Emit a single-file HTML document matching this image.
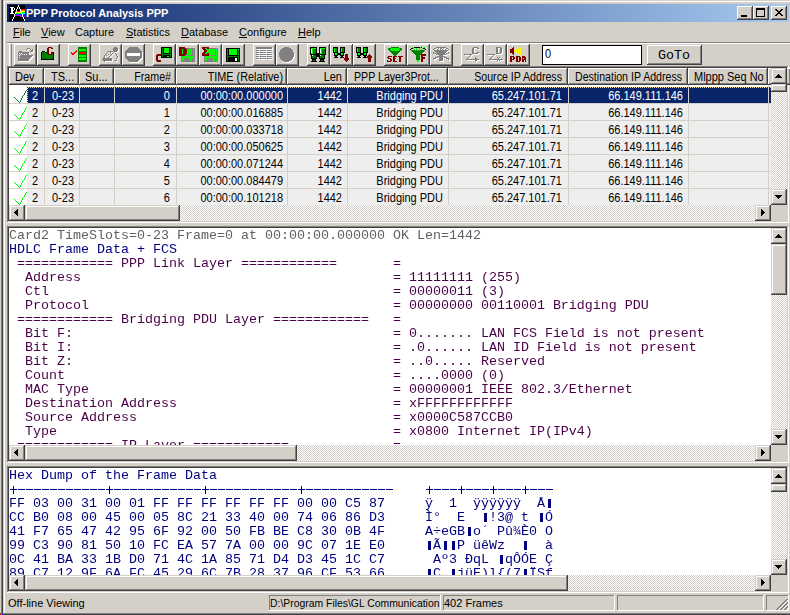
<!DOCTYPE html>
<html><head><meta charset="utf-8"><style>
html,body{margin:0;padding:0;}
body{width:790px;height:615px;overflow:hidden;position:relative;background:#D4D0C8;font-family:"Liberation Sans",sans-serif;font-size:11px;}
body>div,body>span{position:absolute;}
span{position:absolute;white-space:pre;line-height:13px;}
div>span{position:absolute;}
u{text-decoration:underline;text-underline-offset:1px;}
</style></head><body>
<div style="left:0px;top:0px;width:790px;height:615px;background:#D4D0C8;"></div>
<div style="left:1px;top:0px;width:1px;height:615px;background:#808080;"></div>
<div style="left:2px;top:0px;width:1px;height:615px;background:#404040;"></div>
<div style="left:4px;top:1px;width:786px;height:1px;background:#FFFFFF;"></div>
<div style="left:4px;top:1px;width:1px;height:612px;background:#FFFFFF;"></div>
<div style="left:3px;top:613px;width:787px;height:1px;background:#808080;"></div>
<div style="left:3px;top:614px;width:787px;height:1px;background:#404040;"></div>
<div style="left:0px;top:613px;width:3px;height:1px;background:#505050;"></div>
<div style="left:0px;top:614px;width:1px;height:1px;background:#FF0000;"></div>
<div style="left:1px;top:614px;width:1px;height:1px;background:#00FF00;"></div>
<div style="left:2px;top:614px;width:1px;height:1px;background:#0000FF;"></div>
<div style="left:7px;top:4px;width:782px;height:18px;background:#0A246A;background:linear-gradient(to right,#0A246A,#A6CAF0);"></div>
<svg style="position:absolute;left:0px;top:0px" width="30" height="22" viewBox="0 0 30 22" shape-rendering="crispEdges"><rect x="9" y="5" width="9" height="1" fill="#000000"/><rect x="18" y="5" width="1" height="1" fill="#FFFFFF"/><rect x="19" y="5" width="6" height="1" fill="#000000"/><rect x="9" y="6" width="9" height="1" fill="#000000"/><rect x="18" y="6" width="1" height="1" fill="#FFFFFF"/><rect x="19" y="6" width="6" height="1" fill="#000000"/><rect x="9" y="7" width="1" height="1" fill="#000000"/><rect x="10" y="7" width="4" height="1" fill="#FFFFFF"/><rect x="14" y="7" width="3" height="1" fill="#000000"/><rect x="17" y="7" width="1" height="1" fill="#FFFFFF"/><rect x="18" y="7" width="1" height="1" fill="#000000"/><rect x="19" y="7" width="1" height="1" fill="#FFFFFF"/><rect x="20" y="7" width="5" height="1" fill="#000000"/><rect x="9" y="8" width="2" height="1" fill="#000000"/><rect x="11" y="8" width="2" height="1" fill="#FFFFFF"/><rect x="13" y="8" width="1" height="1" fill="#000000"/><rect x="14" y="8" width="1" height="1" fill="#FFFFFF"/><rect x="15" y="8" width="2" height="1" fill="#000000"/><rect x="17" y="8" width="1" height="1" fill="#FFFFFF"/><rect x="18" y="8" width="1" height="1" fill="#000000"/><rect x="19" y="8" width="1" height="1" fill="#FFFFFF"/><rect x="20" y="8" width="5" height="1" fill="#000000"/><rect x="9" y="9" width="2" height="1" fill="#000000"/><rect x="11" y="9" width="2" height="1" fill="#FFFFFF"/><rect x="13" y="9" width="1" height="1" fill="#000000"/><rect x="14" y="9" width="1" height="1" fill="#FFFFFF"/><rect x="15" y="9" width="1" height="1" fill="#000000"/><rect x="16" y="9" width="1" height="1" fill="#FFFFFF"/><rect x="17" y="9" width="3" height="1" fill="#000000"/><rect x="20" y="9" width="1" height="1" fill="#FFFFFF"/><rect x="21" y="9" width="4" height="1" fill="#FF0000"/><rect x="9" y="10" width="2" height="1" fill="#000000"/><rect x="11" y="10" width="3" height="1" fill="#FFFFFF"/><rect x="14" y="10" width="2" height="1" fill="#000000"/><rect x="16" y="10" width="1" height="1" fill="#FFFFFF"/><rect x="17" y="10" width="3" height="1" fill="#000000"/><rect x="20" y="10" width="1" height="1" fill="#FFFFFF"/><rect x="21" y="10" width="4" height="1" fill="#FF8000"/><rect x="9" y="11" width="2" height="1" fill="#000000"/><rect x="11" y="11" width="2" height="1" fill="#FFFFFF"/><rect x="13" y="11" width="2" height="1" fill="#000000"/><rect x="15" y="11" width="1" height="1" fill="#FF0000"/><rect x="16" y="11" width="1" height="1" fill="#FFFFFF"/><rect x="17" y="11" width="3" height="1" fill="#FF0000"/><rect x="20" y="11" width="1" height="1" fill="#FFFFFF"/><rect x="21" y="11" width="4" height="1" fill="#FFFF00"/><rect x="9" y="12" width="2" height="1" fill="#000000"/><rect x="11" y="12" width="2" height="1" fill="#FFFFFF"/><rect x="13" y="12" width="2" height="1" fill="#000000"/><rect x="15" y="12" width="1" height="1" fill="#FFFFFF"/><rect x="16" y="12" width="5" height="1" fill="#FFFF00"/><rect x="21" y="12" width="1" height="1" fill="#FFFFFF"/><rect x="22" y="12" width="3" height="1" fill="#00FF00"/><rect x="9" y="13" width="1" height="1" fill="#000000"/><rect x="10" y="13" width="4" height="1" fill="#FFFFFF"/><rect x="14" y="13" width="1" height="1" fill="#000000"/><rect x="15" y="13" width="1" height="1" fill="#FFFFFF"/><rect x="16" y="13" width="5" height="1" fill="#00FF00"/><rect x="21" y="13" width="1" height="1" fill="#FFFFFF"/><rect x="22" y="13" width="3" height="1" fill="#00FFFF"/><rect x="9" y="14" width="5" height="1" fill="#000000"/><rect x="14" y="14" width="1" height="1" fill="#FFFFFF"/><rect x="15" y="14" width="7" height="1" fill="#0040FF"/><rect x="22" y="14" width="1" height="1" fill="#FFFFFF"/><rect x="23" y="14" width="2" height="1" fill="#0040FF"/><rect x="9" y="15" width="5" height="1" fill="#000000"/><rect x="14" y="15" width="1" height="1" fill="#FFFFFF"/><rect x="15" y="15" width="6" height="1" fill="#C000FF"/><rect x="21" y="15" width="1" height="1" fill="#0040FF"/><rect x="22" y="15" width="1" height="1" fill="#FFFFFF"/><rect x="23" y="15" width="2" height="1" fill="#0040FF"/><rect x="9" y="16" width="5" height="1" fill="#000000"/><rect x="14" y="16" width="1" height="1" fill="#FFFFFF"/><rect x="15" y="16" width="5" height="1" fill="#000000"/><rect x="20" y="16" width="2" height="1" fill="#C000FF"/><rect x="22" y="16" width="1" height="1" fill="#FFFFFF"/><rect x="23" y="16" width="2" height="1" fill="#C000FF"/><rect x="9" y="17" width="4" height="1" fill="#000000"/><rect x="13" y="17" width="1" height="1" fill="#FFFFFF"/><rect x="14" y="17" width="9" height="1" fill="#000000"/><rect x="23" y="17" width="1" height="1" fill="#FFFFFF"/><rect x="24" y="17" width="1" height="1" fill="#000000"/><rect x="9" y="18" width="4" height="1" fill="#000000"/><rect x="13" y="18" width="1" height="1" fill="#FFFFFF"/><rect x="14" y="18" width="9" height="1" fill="#000000"/><rect x="23" y="18" width="1" height="1" fill="#FFFFFF"/><rect x="24" y="18" width="1" height="1" fill="#000000"/><rect x="9" y="19" width="3" height="1" fill="#000000"/><rect x="12" y="19" width="1" height="1" fill="#FFFFFF"/><rect x="13" y="19" width="11" height="1" fill="#000000"/><rect x="24" y="19" width="1" height="1" fill="#FFFFFF"/><rect x="9" y="20" width="3" height="1" fill="#000000"/><rect x="12" y="20" width="1" height="1" fill="#FFFFFF"/><rect x="13" y="20" width="11" height="1" fill="#000000"/><rect x="24" y="20" width="1" height="1" fill="#FFFFFF"/></svg>
<span style="left:26px;top:7px;font-size:11px;color:#FFF;font-weight:bold;font-family:'Liberation Sans';">PPP Protocol Analysis PPP</span>
<div style="left:737px;top:6px;width:16px;height:14px;background:#D4D0C8;"></div>
<div style="left:737px;top:6px;width:16px;height:1px;background:#FFFFFF;"></div>
<div style="left:737px;top:6px;width:1px;height:14px;background:#FFFFFF;"></div>
<div style="left:738px;top:18px;width:14px;height:1px;background:#808080;"></div>
<div style="left:751px;top:7px;width:1px;height:12px;background:#808080;"></div>
<div style="left:737px;top:19px;width:16px;height:1px;background:#404040;"></div>
<div style="left:752px;top:6px;width:1px;height:14px;background:#404040;"></div>
<div style="left:753px;top:6px;width:16px;height:14px;background:#D4D0C8;"></div>
<div style="left:753px;top:6px;width:16px;height:1px;background:#FFFFFF;"></div>
<div style="left:753px;top:6px;width:1px;height:14px;background:#FFFFFF;"></div>
<div style="left:754px;top:18px;width:14px;height:1px;background:#808080;"></div>
<div style="left:767px;top:7px;width:1px;height:12px;background:#808080;"></div>
<div style="left:753px;top:19px;width:16px;height:1px;background:#404040;"></div>
<div style="left:768px;top:6px;width:1px;height:14px;background:#404040;"></div>
<div style="left:771px;top:6px;width:16px;height:14px;background:#D4D0C8;"></div>
<div style="left:771px;top:6px;width:16px;height:1px;background:#FFFFFF;"></div>
<div style="left:771px;top:6px;width:1px;height:14px;background:#FFFFFF;"></div>
<div style="left:772px;top:18px;width:14px;height:1px;background:#808080;"></div>
<div style="left:785px;top:7px;width:1px;height:12px;background:#808080;"></div>
<div style="left:771px;top:19px;width:16px;height:1px;background:#404040;"></div>
<div style="left:786px;top:6px;width:1px;height:14px;background:#404040;"></div>
<div style="left:741px;top:15px;width:6px;height:2px;background:#000;"></div>
<div style="left:756px;top:8px;width:9px;height:2px;background:#000;"></div>
<div style="left:756px;top:8px;width:1px;height:9px;background:#000;"></div>
<div style="left:764px;top:8px;width:1px;height:9px;background:#000;"></div>
<div style="left:756px;top:16px;width:9px;height:1px;background:#000;"></div>
<div style="left:775px;top:9px;width:2px;height:1px;background:#000;"></div>
<div style="left:781px;top:9px;width:2px;height:1px;background:#000;"></div>
<div style="left:776px;top:10px;width:2px;height:1px;background:#000;"></div>
<div style="left:780px;top:10px;width:2px;height:1px;background:#000;"></div>
<div style="left:777px;top:11px;width:4px;height:1px;background:#000;"></div>
<div style="left:778px;top:12px;width:2px;height:1px;background:#000;"></div>
<div style="left:777px;top:13px;width:4px;height:1px;background:#000;"></div>
<div style="left:776px;top:14px;width:2px;height:1px;background:#000;"></div>
<div style="left:780px;top:14px;width:2px;height:1px;background:#000;"></div>
<div style="left:775px;top:15px;width:2px;height:1px;background:#000;"></div>
<div style="left:781px;top:15px;width:2px;height:1px;background:#000;"></div>
<span style="left:13px;top:26px;font-size:11px;color:#000;font-weight:normal;font-family:'Liberation Sans';"><u>F</u>ile</span>
<span style="left:41px;top:26px;font-size:11px;color:#000;font-weight:normal;font-family:'Liberation Sans';"><u>V</u>iew</span>
<span style="left:75px;top:26px;font-size:11px;color:#000;font-weight:normal;font-family:'Liberation Sans';">Capture</span>
<span style="left:126px;top:26px;font-size:11px;color:#000;font-weight:normal;font-family:'Liberation Sans';"><u>S</u>tatistics</span>
<span style="left:181px;top:26px;font-size:11px;color:#000;font-weight:normal;font-family:'Liberation Sans';"><u>D</u>atabase</span>
<span style="left:239px;top:26px;font-size:11px;color:#000;font-weight:normal;font-family:'Liberation Sans';"><u>C</u>onfigure</span>
<span style="left:298px;top:26px;font-size:11px;color:#000;font-weight:normal;font-family:'Liberation Sans';"><u>H</u>elp</span>
<div style="left:7px;top:42px;width:783px;height:1px;background:#808080;"></div>
<div style="left:7px;top:43px;width:783px;height:1px;background:#FFFFFF;"></div>
<div style="left:9px;top:44px;width:1px;height:22px;background:#FFFFFF;"></div>
<div style="left:11px;top:44px;width:1px;height:22px;background:#808080;"></div>
<div style="left:14px;top:44px;width:23px;height:22px;background:#D4D0C8;"></div>
<div style="left:14px;top:44px;width:23px;height:1px;background:#FFFFFF;"></div>
<div style="left:14px;top:44px;width:1px;height:22px;background:#FFFFFF;"></div>
<div style="left:15px;top:64px;width:21px;height:1px;background:#808080;"></div>
<div style="left:35px;top:45px;width:1px;height:20px;background:#808080;"></div>
<div style="left:14px;top:65px;width:23px;height:1px;background:#404040;"></div>
<div style="left:36px;top:44px;width:1px;height:22px;background:#404040;"></div>
<div style="left:37px;top:44px;width:23px;height:22px;background:#D4D0C8;"></div>
<div style="left:37px;top:44px;width:23px;height:1px;background:#FFFFFF;"></div>
<div style="left:37px;top:44px;width:1px;height:22px;background:#FFFFFF;"></div>
<div style="left:38px;top:64px;width:21px;height:1px;background:#808080;"></div>
<div style="left:58px;top:45px;width:1px;height:20px;background:#808080;"></div>
<div style="left:37px;top:65px;width:23px;height:1px;background:#404040;"></div>
<div style="left:59px;top:44px;width:1px;height:22px;background:#404040;"></div>
<div style="left:68px;top:44px;width:23px;height:22px;background:#D4D0C8;"></div>
<div style="left:68px;top:44px;width:23px;height:1px;background:#FFFFFF;"></div>
<div style="left:68px;top:44px;width:1px;height:22px;background:#FFFFFF;"></div>
<div style="left:69px;top:64px;width:21px;height:1px;background:#808080;"></div>
<div style="left:89px;top:45px;width:1px;height:20px;background:#808080;"></div>
<div style="left:68px;top:65px;width:23px;height:1px;background:#404040;"></div>
<div style="left:90px;top:44px;width:1px;height:22px;background:#404040;"></div>
<div style="left:99px;top:44px;width:23px;height:22px;background:#D4D0C8;"></div>
<div style="left:99px;top:44px;width:23px;height:1px;background:#FFFFFF;"></div>
<div style="left:99px;top:44px;width:1px;height:22px;background:#FFFFFF;"></div>
<div style="left:100px;top:64px;width:21px;height:1px;background:#808080;"></div>
<div style="left:120px;top:45px;width:1px;height:20px;background:#808080;"></div>
<div style="left:99px;top:65px;width:23px;height:1px;background:#404040;"></div>
<div style="left:121px;top:44px;width:1px;height:22px;background:#404040;"></div>
<div style="left:122px;top:44px;width:23px;height:22px;background:#D4D0C8;"></div>
<div style="left:122px;top:44px;width:23px;height:1px;background:#FFFFFF;"></div>
<div style="left:122px;top:44px;width:1px;height:22px;background:#FFFFFF;"></div>
<div style="left:123px;top:64px;width:21px;height:1px;background:#808080;"></div>
<div style="left:143px;top:45px;width:1px;height:20px;background:#808080;"></div>
<div style="left:122px;top:65px;width:23px;height:1px;background:#404040;"></div>
<div style="left:144px;top:44px;width:1px;height:22px;background:#404040;"></div>
<div style="left:153px;top:44px;width:23px;height:22px;background:#D4D0C8;"></div>
<div style="left:153px;top:44px;width:23px;height:1px;background:#FFFFFF;"></div>
<div style="left:153px;top:44px;width:1px;height:22px;background:#FFFFFF;"></div>
<div style="left:154px;top:64px;width:21px;height:1px;background:#808080;"></div>
<div style="left:174px;top:45px;width:1px;height:20px;background:#808080;"></div>
<div style="left:153px;top:65px;width:23px;height:1px;background:#404040;"></div>
<div style="left:175px;top:44px;width:1px;height:22px;background:#404040;"></div>
<div style="left:176px;top:44px;width:23px;height:22px;background:#D4D0C8;"></div>
<div style="left:176px;top:44px;width:23px;height:1px;background:#FFFFFF;"></div>
<div style="left:176px;top:44px;width:1px;height:22px;background:#FFFFFF;"></div>
<div style="left:177px;top:64px;width:21px;height:1px;background:#808080;"></div>
<div style="left:197px;top:45px;width:1px;height:20px;background:#808080;"></div>
<div style="left:176px;top:65px;width:23px;height:1px;background:#404040;"></div>
<div style="left:198px;top:44px;width:1px;height:22px;background:#404040;"></div>
<div style="left:199px;top:44px;width:23px;height:22px;background:#D4D0C8;"></div>
<div style="left:199px;top:44px;width:23px;height:1px;background:#FFFFFF;"></div>
<div style="left:199px;top:44px;width:1px;height:22px;background:#FFFFFF;"></div>
<div style="left:200px;top:64px;width:21px;height:1px;background:#808080;"></div>
<div style="left:220px;top:45px;width:1px;height:20px;background:#808080;"></div>
<div style="left:199px;top:65px;width:23px;height:1px;background:#404040;"></div>
<div style="left:221px;top:44px;width:1px;height:22px;background:#404040;"></div>
<div style="left:222px;top:44px;width:23px;height:22px;background:#D4D0C8;"></div>
<div style="left:222px;top:44px;width:23px;height:1px;background:#FFFFFF;"></div>
<div style="left:222px;top:44px;width:1px;height:22px;background:#FFFFFF;"></div>
<div style="left:223px;top:64px;width:21px;height:1px;background:#808080;"></div>
<div style="left:243px;top:45px;width:1px;height:20px;background:#808080;"></div>
<div style="left:222px;top:65px;width:23px;height:1px;background:#404040;"></div>
<div style="left:244px;top:44px;width:1px;height:22px;background:#404040;"></div>
<div style="left:253px;top:44px;width:23px;height:22px;background:#D4D0C8;"></div>
<div style="left:253px;top:44px;width:23px;height:1px;background:#FFFFFF;"></div>
<div style="left:253px;top:44px;width:1px;height:22px;background:#FFFFFF;"></div>
<div style="left:254px;top:64px;width:21px;height:1px;background:#808080;"></div>
<div style="left:274px;top:45px;width:1px;height:20px;background:#808080;"></div>
<div style="left:253px;top:65px;width:23px;height:1px;background:#404040;"></div>
<div style="left:275px;top:44px;width:1px;height:22px;background:#404040;"></div>
<div style="left:276px;top:44px;width:23px;height:22px;background:#D4D0C8;"></div>
<div style="left:276px;top:44px;width:23px;height:1px;background:#FFFFFF;"></div>
<div style="left:276px;top:44px;width:1px;height:22px;background:#FFFFFF;"></div>
<div style="left:277px;top:64px;width:21px;height:1px;background:#808080;"></div>
<div style="left:297px;top:45px;width:1px;height:20px;background:#808080;"></div>
<div style="left:276px;top:65px;width:23px;height:1px;background:#404040;"></div>
<div style="left:298px;top:44px;width:1px;height:22px;background:#404040;"></div>
<div style="left:307px;top:44px;width:23px;height:22px;background:#D4D0C8;"></div>
<div style="left:307px;top:44px;width:23px;height:1px;background:#FFFFFF;"></div>
<div style="left:307px;top:44px;width:1px;height:22px;background:#FFFFFF;"></div>
<div style="left:308px;top:64px;width:21px;height:1px;background:#808080;"></div>
<div style="left:328px;top:45px;width:1px;height:20px;background:#808080;"></div>
<div style="left:307px;top:65px;width:23px;height:1px;background:#404040;"></div>
<div style="left:329px;top:44px;width:1px;height:22px;background:#404040;"></div>
<div style="left:330px;top:44px;width:23px;height:22px;background:#D4D0C8;"></div>
<div style="left:330px;top:44px;width:23px;height:1px;background:#FFFFFF;"></div>
<div style="left:330px;top:44px;width:1px;height:22px;background:#FFFFFF;"></div>
<div style="left:331px;top:64px;width:21px;height:1px;background:#808080;"></div>
<div style="left:351px;top:45px;width:1px;height:20px;background:#808080;"></div>
<div style="left:330px;top:65px;width:23px;height:1px;background:#404040;"></div>
<div style="left:352px;top:44px;width:1px;height:22px;background:#404040;"></div>
<div style="left:353px;top:44px;width:23px;height:22px;background:#D4D0C8;"></div>
<div style="left:353px;top:44px;width:23px;height:1px;background:#FFFFFF;"></div>
<div style="left:353px;top:44px;width:1px;height:22px;background:#FFFFFF;"></div>
<div style="left:354px;top:64px;width:21px;height:1px;background:#808080;"></div>
<div style="left:374px;top:45px;width:1px;height:20px;background:#808080;"></div>
<div style="left:353px;top:65px;width:23px;height:1px;background:#404040;"></div>
<div style="left:375px;top:44px;width:1px;height:22px;background:#404040;"></div>
<div style="left:384px;top:44px;width:23px;height:22px;background:#D4D0C8;"></div>
<div style="left:384px;top:44px;width:23px;height:1px;background:#FFFFFF;"></div>
<div style="left:384px;top:44px;width:1px;height:22px;background:#FFFFFF;"></div>
<div style="left:385px;top:64px;width:21px;height:1px;background:#808080;"></div>
<div style="left:405px;top:45px;width:1px;height:20px;background:#808080;"></div>
<div style="left:384px;top:65px;width:23px;height:1px;background:#404040;"></div>
<div style="left:406px;top:44px;width:1px;height:22px;background:#404040;"></div>
<div style="left:407px;top:44px;width:23px;height:22px;background:#D4D0C8;"></div>
<div style="left:407px;top:44px;width:23px;height:1px;background:#FFFFFF;"></div>
<div style="left:407px;top:44px;width:1px;height:22px;background:#FFFFFF;"></div>
<div style="left:408px;top:64px;width:21px;height:1px;background:#808080;"></div>
<div style="left:428px;top:45px;width:1px;height:20px;background:#808080;"></div>
<div style="left:407px;top:65px;width:23px;height:1px;background:#404040;"></div>
<div style="left:429px;top:44px;width:1px;height:22px;background:#404040;"></div>
<div style="left:430px;top:44px;width:23px;height:22px;background:#D4D0C8;"></div>
<div style="left:430px;top:44px;width:23px;height:1px;background:#FFFFFF;"></div>
<div style="left:430px;top:44px;width:1px;height:22px;background:#FFFFFF;"></div>
<div style="left:431px;top:64px;width:21px;height:1px;background:#808080;"></div>
<div style="left:451px;top:45px;width:1px;height:20px;background:#808080;"></div>
<div style="left:430px;top:65px;width:23px;height:1px;background:#404040;"></div>
<div style="left:452px;top:44px;width:1px;height:22px;background:#404040;"></div>
<div style="left:461px;top:44px;width:23px;height:22px;background:#D4D0C8;"></div>
<div style="left:461px;top:44px;width:23px;height:1px;background:#FFFFFF;"></div>
<div style="left:461px;top:44px;width:1px;height:22px;background:#FFFFFF;"></div>
<div style="left:462px;top:64px;width:21px;height:1px;background:#808080;"></div>
<div style="left:482px;top:45px;width:1px;height:20px;background:#808080;"></div>
<div style="left:461px;top:65px;width:23px;height:1px;background:#404040;"></div>
<div style="left:483px;top:44px;width:1px;height:22px;background:#404040;"></div>
<div style="left:484px;top:44px;width:23px;height:22px;background:#D4D0C8;"></div>
<div style="left:484px;top:44px;width:23px;height:1px;background:#FFFFFF;"></div>
<div style="left:484px;top:44px;width:1px;height:22px;background:#FFFFFF;"></div>
<div style="left:485px;top:64px;width:21px;height:1px;background:#808080;"></div>
<div style="left:505px;top:45px;width:1px;height:20px;background:#808080;"></div>
<div style="left:484px;top:65px;width:23px;height:1px;background:#404040;"></div>
<div style="left:506px;top:44px;width:1px;height:22px;background:#404040;"></div>
<div style="left:507px;top:44px;width:23px;height:22px;background:#D4D0C8;"></div>
<div style="left:507px;top:44px;width:23px;height:1px;background:#FFFFFF;"></div>
<div style="left:507px;top:44px;width:1px;height:22px;background:#FFFFFF;"></div>
<div style="left:508px;top:64px;width:21px;height:1px;background:#808080;"></div>
<div style="left:528px;top:45px;width:1px;height:20px;background:#808080;"></div>
<div style="left:507px;top:65px;width:23px;height:1px;background:#404040;"></div>
<div style="left:529px;top:44px;width:1px;height:22px;background:#404040;"></div>
<svg style="position:absolute;left:0px;top:0px" width="560" height="66" viewBox="0 0 560 66" shape-rendering="crispEdges"><rect x="27" y="48" width="3" height="1" fill="#808080"/><rect x="26" y="49" width="1" height="1" fill="#808080"/><rect x="28" y="49" width="2" height="1" fill="#FFFFFF"/><rect x="30" y="49" width="1" height="1" fill="#808080"/><rect x="32" y="49" width="1" height="1" fill="#808080"/><rect x="27" y="50" width="1" height="1" fill="#FFFFFF"/><rect x="31" y="50" width="2" height="1" fill="#808080"/><rect x="33" y="50" width="1" height="1" fill="#FFFFFF"/><rect x="19" y="51" width="3" height="1" fill="#808080"/><rect x="30" y="51" width="3" height="1" fill="#808080"/><rect x="33" y="51" width="1" height="1" fill="#FFFFFF"/><rect x="18" y="52" width="11" height="1" fill="#808080"/><rect x="31" y="52" width="3" height="1" fill="#FFFFFF"/><rect x="18" y="53" width="1" height="1" fill="#808080"/><rect x="19" y="53" width="1" height="1" fill="#FFFFFF"/><rect x="20" y="53" width="1" height="1" fill="#808080"/><rect x="21" y="53" width="1" height="1" fill="#FFFFFF"/><rect x="22" y="53" width="7" height="1" fill="#808080"/><rect x="29" y="53" width="1" height="1" fill="#FFFFFF"/><rect x="18" y="54" width="2" height="1" fill="#808080"/><rect x="20" y="54" width="1" height="1" fill="#FFFFFF"/><rect x="21" y="54" width="1" height="1" fill="#808080"/><rect x="22" y="54" width="1" height="1" fill="#FFFFFF"/><rect x="23" y="54" width="1" height="1" fill="#808080"/><rect x="24" y="54" width="1" height="1" fill="#FFFFFF"/><rect x="25" y="54" width="1" height="1" fill="#808080"/><rect x="26" y="54" width="1" height="1" fill="#FFFFFF"/><rect x="27" y="54" width="2" height="1" fill="#808080"/><rect x="29" y="54" width="1" height="1" fill="#FFFFFF"/><rect x="18" y="55" width="1" height="1" fill="#808080"/><rect x="19" y="55" width="1" height="1" fill="#FFFFFF"/><rect x="20" y="55" width="13" height="1" fill="#808080"/><rect x="18" y="56" width="14" height="1" fill="#808080"/><rect x="32" y="56" width="2" height="1" fill="#FFFFFF"/><rect x="18" y="57" width="1" height="1" fill="#808080"/><rect x="19" y="57" width="1" height="1" fill="#FFFFFF"/><rect x="20" y="57" width="11" height="1" fill="#808080"/><rect x="31" y="57" width="2" height="1" fill="#FFFFFF"/><rect x="18" y="58" width="12" height="1" fill="#808080"/><rect x="30" y="58" width="2" height="1" fill="#FFFFFF"/><rect x="18" y="59" width="11" height="1" fill="#808080"/><rect x="29" y="59" width="2" height="1" fill="#FFFFFF"/><rect x="18" y="60" width="11" height="1" fill="#808080"/><rect x="29" y="60" width="1" height="1" fill="#FFFFFF"/><rect x="19" y="61" width="11" height="1" fill="#FFFFFF"/><rect x="48" y="47" width="4" height="1" fill="#800000"/><rect x="47" y="48" width="2" height="1" fill="#800000"/><rect x="51" y="48" width="2" height="1" fill="#800000"/><rect x="47" y="49" width="2" height="1" fill="#800000"/><rect x="47" y="50" width="2" height="1" fill="#800000"/><rect x="42" y="51" width="3" height="1" fill="#000000"/><rect x="47" y="51" width="2" height="1" fill="#800000"/><rect x="41" y="52" width="1" height="1" fill="#000000"/><rect x="42" y="52" width="3" height="1" fill="#008000"/><rect x="45" y="52" width="2" height="1" fill="#000000"/><rect x="47" y="52" width="2" height="1" fill="#800000"/><rect x="51" y="52" width="2" height="1" fill="#800000"/><rect x="53" y="52" width="1" height="1" fill="#000000"/><rect x="41" y="53" width="1" height="1" fill="#000000"/><rect x="42" y="53" width="5" height="1" fill="#008000"/><rect x="47" y="53" width="2" height="1" fill="#800000"/><rect x="51" y="53" width="2" height="1" fill="#800000"/><rect x="53" y="53" width="1" height="1" fill="#000000"/><rect x="41" y="54" width="1" height="1" fill="#000000"/><rect x="42" y="54" width="6" height="1" fill="#008000"/><rect x="48" y="54" width="4" height="1" fill="#800000"/><rect x="52" y="54" width="1" height="1" fill="#008000"/><rect x="53" y="54" width="1" height="1" fill="#000000"/><rect x="41" y="55" width="1" height="1" fill="#000000"/><rect x="42" y="55" width="11" height="1" fill="#008000"/><rect x="53" y="55" width="1" height="1" fill="#000000"/><rect x="41" y="56" width="1" height="1" fill="#000000"/><rect x="42" y="56" width="11" height="1" fill="#008000"/><rect x="53" y="56" width="1" height="1" fill="#000000"/><rect x="41" y="57" width="1" height="1" fill="#000000"/><rect x="42" y="57" width="11" height="1" fill="#008000"/><rect x="53" y="57" width="1" height="1" fill="#000000"/><rect x="41" y="58" width="1" height="1" fill="#000000"/><rect x="42" y="58" width="11" height="1" fill="#008000"/><rect x="53" y="58" width="1" height="1" fill="#000000"/><rect x="41" y="59" width="13" height="1" fill="#000000"/><rect x="78" y="47" width="9" height="1" fill="#008000"/><rect x="78" y="48" width="9" height="1" fill="#008000"/><rect x="78" y="49" width="1" height="1" fill="#008000"/><rect x="79" y="49" width="7" height="1" fill="#00FF00"/><rect x="86" y="49" width="1" height="1" fill="#008000"/><rect x="76" y="50" width="1" height="1" fill="#FF0000"/><rect x="78" y="50" width="1" height="1" fill="#008000"/><rect x="79" y="50" width="7" height="1" fill="#00FF00"/><rect x="86" y="50" width="1" height="1" fill="#008000"/><rect x="75" y="51" width="2" height="1" fill="#FF0000"/><rect x="78" y="51" width="9" height="1" fill="#008000"/><rect x="71" y="52" width="1" height="1" fill="#FF0000"/><rect x="74" y="52" width="2" height="1" fill="#FF0000"/><rect x="78" y="52" width="1" height="1" fill="#008000"/><rect x="79" y="52" width="7" height="1" fill="#FF0000"/><rect x="86" y="52" width="1" height="1" fill="#008000"/><rect x="71" y="53" width="4" height="1" fill="#FF0000"/><rect x="78" y="53" width="1" height="1" fill="#008000"/><rect x="79" y="53" width="7" height="1" fill="#FF0000"/><rect x="86" y="53" width="1" height="1" fill="#008000"/><rect x="72" y="54" width="2" height="1" fill="#FF0000"/><rect x="78" y="54" width="9" height="1" fill="#008000"/><rect x="78" y="55" width="1" height="1" fill="#008000"/><rect x="79" y="55" width="7" height="1" fill="#00FF00"/><rect x="86" y="55" width="1" height="1" fill="#008000"/><rect x="78" y="56" width="1" height="1" fill="#008000"/><rect x="79" y="56" width="7" height="1" fill="#00FF00"/><rect x="86" y="56" width="1" height="1" fill="#008000"/><rect x="78" y="57" width="9" height="1" fill="#008000"/><rect x="78" y="58" width="1" height="1" fill="#008000"/><rect x="79" y="58" width="7" height="1" fill="#00FF00"/><rect x="86" y="58" width="1" height="1" fill="#008000"/><rect x="78" y="59" width="1" height="1" fill="#008000"/><rect x="79" y="59" width="7" height="1" fill="#00FF00"/><rect x="86" y="59" width="1" height="1" fill="#008000"/><rect x="78" y="60" width="9" height="1" fill="#008000"/><rect x="78" y="61" width="9" height="1" fill="#008000"/><rect x="114" y="47" width="3" height="1" fill="#808080"/><rect x="113" y="48" width="5" height="1" fill="#808080"/><rect x="113" y="49" width="5" height="1" fill="#808080"/><rect x="118" y="49" width="1" height="1" fill="#FFFFFF"/><rect x="113" y="50" width="5" height="1" fill="#808080"/><rect x="118" y="50" width="1" height="1" fill="#FFFFFF"/><rect x="108" y="51" width="5" height="1" fill="#808080"/><rect x="114" y="51" width="3" height="1" fill="#808080"/><rect x="117" y="51" width="2" height="1" fill="#FFFFFF"/><rect x="107" y="52" width="1" height="1" fill="#808080"/><rect x="109" y="52" width="1" height="1" fill="#FFFFFF"/><rect x="110" y="52" width="1" height="1" fill="#808080"/><rect x="111" y="52" width="2" height="1" fill="#FFFFFF"/><rect x="113" y="52" width="1" height="1" fill="#808080"/><rect x="115" y="52" width="3" height="1" fill="#FFFFFF"/><rect x="106" y="53" width="1" height="1" fill="#808080"/><rect x="108" y="53" width="1" height="1" fill="#FFFFFF"/><rect x="110" y="53" width="1" height="1" fill="#808080"/><rect x="111" y="53" width="1" height="1" fill="#FFFFFF"/><rect x="112" y="53" width="1" height="1" fill="#808080"/><rect x="114" y="53" width="1" height="1" fill="#FFFFFF"/><rect x="115" y="53" width="1" height="1" fill="#808080"/><rect x="105" y="54" width="1" height="1" fill="#808080"/><rect x="107" y="54" width="1" height="1" fill="#FFFFFF"/><rect x="108" y="54" width="1" height="1" fill="#808080"/><rect x="111" y="54" width="1" height="1" fill="#808080"/><rect x="113" y="54" width="1" height="1" fill="#FFFFFF"/><rect x="116" y="54" width="1" height="1" fill="#808080"/><rect x="104" y="55" width="1" height="1" fill="#808080"/><rect x="106" y="55" width="1" height="1" fill="#808080"/><rect x="109" y="55" width="1" height="1" fill="#FFFFFF"/><rect x="110" y="55" width="1" height="1" fill="#808080"/><rect x="112" y="55" width="1" height="1" fill="#FFFFFF"/><rect x="116" y="55" width="1" height="1" fill="#808080"/><rect x="117" y="55" width="1" height="1" fill="#FFFFFF"/><rect x="104" y="56" width="1" height="1" fill="#808080"/><rect x="105" y="56" width="1" height="1" fill="#FFFFFF"/><rect x="107" y="56" width="1" height="1" fill="#FFFFFF"/><rect x="109" y="56" width="1" height="1" fill="#808080"/><rect x="111" y="56" width="1" height="1" fill="#FFFFFF"/><rect x="117" y="56" width="1" height="1" fill="#808080"/><rect x="103" y="57" width="2" height="1" fill="#808080"/><rect x="105" y="57" width="1" height="1" fill="#FFFFFF"/><rect x="108" y="57" width="1" height="1" fill="#808080"/><rect x="110" y="57" width="1" height="1" fill="#FFFFFF"/><rect x="117" y="57" width="1" height="1" fill="#808080"/><rect x="118" y="57" width="1" height="1" fill="#FFFFFF"/><rect x="103" y="58" width="9" height="1" fill="#808080"/><rect x="116" y="58" width="1" height="1" fill="#808080"/><rect x="118" y="58" width="1" height="1" fill="#FFFFFF"/><rect x="102" y="59" width="10" height="1" fill="#808080"/><rect x="112" y="59" width="1" height="1" fill="#FFFFFF"/><rect x="117" y="59" width="1" height="1" fill="#FFFFFF"/><rect x="103" y="60" width="9" height="1" fill="#808080"/><rect x="112" y="60" width="1" height="1" fill="#FFFFFF"/><rect x="115" y="60" width="2" height="1" fill="#808080"/><rect x="104" y="61" width="1" height="1" fill="#808080"/><rect x="105" y="61" width="8" height="1" fill="#FFFFFF"/><rect x="116" y="61" width="2" height="1" fill="#FFFFFF"/><rect x="105" y="62" width="1" height="1" fill="#FFFFFF"/><rect x="129" y="47" width="9" height="1" fill="#808080"/><rect x="128" y="48" width="11" height="1" fill="#808080"/><rect x="127" y="49" width="13" height="1" fill="#808080"/><rect x="126" y="50" width="15" height="1" fill="#808080"/><rect x="125" y="51" width="17" height="1" fill="#808080"/><rect x="125" y="52" width="17" height="1" fill="#808080"/><rect x="142" y="52" width="1" height="1" fill="#FFFFFF"/><rect x="125" y="53" width="2" height="1" fill="#808080"/><rect x="127" y="53" width="13" height="1" fill="#FFFFFF"/><rect x="140" y="53" width="2" height="1" fill="#808080"/><rect x="142" y="53" width="1" height="1" fill="#FFFFFF"/><rect x="125" y="54" width="2" height="1" fill="#808080"/><rect x="127" y="54" width="13" height="1" fill="#FFFFFF"/><rect x="140" y="54" width="2" height="1" fill="#808080"/><rect x="142" y="54" width="1" height="1" fill="#FFFFFF"/><rect x="125" y="55" width="2" height="1" fill="#808080"/><rect x="127" y="55" width="13" height="1" fill="#FFFFFF"/><rect x="140" y="55" width="2" height="1" fill="#808080"/><rect x="142" y="55" width="1" height="1" fill="#FFFFFF"/><rect x="125" y="56" width="17" height="1" fill="#808080"/><rect x="142" y="56" width="1" height="1" fill="#FFFFFF"/><rect x="125" y="57" width="17" height="1" fill="#808080"/><rect x="142" y="57" width="1" height="1" fill="#FFFFFF"/><rect x="126" y="58" width="15" height="1" fill="#808080"/><rect x="141" y="58" width="2" height="1" fill="#FFFFFF"/><rect x="127" y="59" width="13" height="1" fill="#808080"/><rect x="140" y="59" width="2" height="1" fill="#FFFFFF"/><rect x="128" y="60" width="11" height="1" fill="#808080"/><rect x="139" y="60" width="2" height="1" fill="#FFFFFF"/><rect x="129" y="61" width="9" height="1" fill="#808080"/><rect x="138" y="61" width="2" height="1" fill="#FFFFFF"/><rect x="130" y="62" width="9" height="1" fill="#FFFFFF"/><rect x="161" y="47" width="11" height="1" fill="#000000"/><rect x="161" y="48" width="1" height="1" fill="#000000"/><rect x="162" y="48" width="1" height="1" fill="#008000"/><rect x="163" y="48" width="1" height="1" fill="#000000"/><rect x="164" y="48" width="5" height="1" fill="#00FF00"/><rect x="169" y="48" width="1" height="1" fill="#000000"/><rect x="170" y="48" width="1" height="1" fill="#008000"/><rect x="171" y="48" width="1" height="1" fill="#000000"/><rect x="161" y="49" width="1" height="1" fill="#000000"/><rect x="162" y="49" width="1" height="1" fill="#008000"/><rect x="163" y="49" width="1" height="1" fill="#000000"/><rect x="164" y="49" width="5" height="1" fill="#00FF00"/><rect x="169" y="49" width="1" height="1" fill="#000000"/><rect x="170" y="49" width="1" height="1" fill="#008000"/><rect x="171" y="49" width="1" height="1" fill="#000000"/><rect x="161" y="50" width="1" height="1" fill="#000000"/><rect x="162" y="50" width="1" height="1" fill="#008000"/><rect x="163" y="50" width="1" height="1" fill="#000000"/><rect x="164" y="50" width="5" height="1" fill="#00FF00"/><rect x="169" y="50" width="1" height="1" fill="#000000"/><rect x="170" y="50" width="1" height="1" fill="#008000"/><rect x="171" y="50" width="1" height="1" fill="#000000"/><rect x="161" y="51" width="1" height="1" fill="#000000"/><rect x="162" y="51" width="1" height="1" fill="#008000"/><rect x="163" y="51" width="1" height="1" fill="#000000"/><rect x="164" y="51" width="5" height="1" fill="#00FF00"/><rect x="169" y="51" width="1" height="1" fill="#000000"/><rect x="170" y="51" width="1" height="1" fill="#008000"/><rect x="171" y="51" width="1" height="1" fill="#000000"/><rect x="161" y="52" width="1" height="1" fill="#000000"/><rect x="162" y="52" width="1" height="1" fill="#008000"/><rect x="163" y="52" width="1" height="1" fill="#000000"/><rect x="164" y="52" width="5" height="1" fill="#00FF00"/><rect x="169" y="52" width="1" height="1" fill="#000000"/><rect x="170" y="52" width="1" height="1" fill="#008000"/><rect x="171" y="52" width="1" height="1" fill="#000000"/><rect x="161" y="53" width="1" height="1" fill="#000000"/><rect x="162" y="53" width="1" height="1" fill="#008000"/><rect x="163" y="53" width="7" height="1" fill="#000000"/><rect x="170" y="53" width="1" height="1" fill="#008000"/><rect x="171" y="53" width="1" height="1" fill="#000000"/><rect x="157" y="54" width="4" height="1" fill="#800000"/><rect x="161" y="54" width="1" height="1" fill="#000000"/><rect x="162" y="54" width="9" height="1" fill="#008000"/><rect x="171" y="54" width="1" height="1" fill="#000000"/><rect x="156" y="55" width="5" height="1" fill="#800000"/><rect x="161" y="55" width="1" height="1" fill="#000000"/><rect x="162" y="55" width="1" height="1" fill="#008000"/><rect x="163" y="55" width="7" height="1" fill="#000000"/><rect x="170" y="55" width="1" height="1" fill="#008000"/><rect x="171" y="55" width="1" height="1" fill="#000000"/><rect x="156" y="56" width="2" height="1" fill="#800000"/><rect x="161" y="56" width="1" height="1" fill="#000000"/><rect x="162" y="56" width="1" height="1" fill="#008000"/><rect x="163" y="56" width="4" height="1" fill="#000000"/><rect x="167" y="56" width="2" height="1" fill="#00FF00"/><rect x="169" y="56" width="1" height="1" fill="#000000"/><rect x="170" y="56" width="1" height="1" fill="#008000"/><rect x="171" y="56" width="1" height="1" fill="#000000"/><rect x="156" y="57" width="2" height="1" fill="#800000"/><rect x="161" y="57" width="11" height="1" fill="#000000"/><rect x="156" y="58" width="2" height="1" fill="#800000"/><rect x="156" y="59" width="2" height="1" fill="#800000"/><rect x="156" y="60" width="5" height="1" fill="#800000"/><rect x="157" y="61" width="4" height="1" fill="#800000"/><rect x="181" y="48" width="14" height="1" fill="#808080"/><rect x="181" y="49" width="1" height="1" fill="#808080"/><rect x="182" y="49" width="10" height="1" fill="#00FF00"/><rect x="192" y="49" width="1" height="1" fill="#808080"/><rect x="193" y="49" width="1" height="1" fill="#00FFFF"/><rect x="194" y="49" width="1" height="1" fill="#808080"/><rect x="181" y="50" width="1" height="1" fill="#808080"/><rect x="182" y="50" width="10" height="1" fill="#00FF00"/><rect x="192" y="50" width="1" height="1" fill="#808080"/><rect x="193" y="50" width="1" height="1" fill="#00FF00"/><rect x="194" y="50" width="1" height="1" fill="#808080"/><rect x="181" y="51" width="1" height="1" fill="#808080"/><rect x="182" y="51" width="10" height="1" fill="#00FF00"/><rect x="192" y="51" width="1" height="1" fill="#808080"/><rect x="193" y="51" width="1" height="1" fill="#00FF00"/><rect x="194" y="51" width="1" height="1" fill="#808080"/><rect x="181" y="52" width="1" height="1" fill="#808080"/><rect x="182" y="52" width="10" height="1" fill="#00FF00"/><rect x="192" y="52" width="1" height="1" fill="#808080"/><rect x="193" y="52" width="1" height="1" fill="#00FF00"/><rect x="194" y="52" width="1" height="1" fill="#808080"/><rect x="181" y="53" width="1" height="1" fill="#808080"/><rect x="182" y="53" width="10" height="1" fill="#00FF00"/><rect x="192" y="53" width="1" height="1" fill="#808080"/><rect x="193" y="53" width="1" height="1" fill="#00FF00"/><rect x="194" y="53" width="1" height="1" fill="#808080"/><rect x="181" y="54" width="1" height="1" fill="#808080"/><rect x="182" y="54" width="10" height="1" fill="#00FF00"/><rect x="192" y="54" width="1" height="1" fill="#808080"/><rect x="193" y="54" width="1" height="1" fill="#00FF00"/><rect x="194" y="54" width="1" height="1" fill="#808080"/><rect x="181" y="55" width="1" height="1" fill="#808080"/><rect x="182" y="55" width="3" height="1" fill="#00FF00"/><rect x="185" y="55" width="8" height="1" fill="#808080"/><rect x="193" y="55" width="1" height="1" fill="#00FF00"/><rect x="194" y="55" width="1" height="1" fill="#808080"/><rect x="181" y="56" width="1" height="1" fill="#808080"/><rect x="182" y="56" width="12" height="1" fill="#00FF00"/><rect x="194" y="56" width="1" height="1" fill="#808080"/><rect x="181" y="57" width="1" height="1" fill="#808080"/><rect x="182" y="57" width="12" height="1" fill="#00FF00"/><rect x="194" y="57" width="1" height="1" fill="#808080"/><rect x="181" y="58" width="1" height="1" fill="#808080"/><rect x="182" y="58" width="2" height="1" fill="#00FF00"/><rect x="184" y="58" width="6" height="1" fill="#808080"/><rect x="190" y="58" width="2" height="1" fill="#00FF00"/><rect x="192" y="58" width="1" height="1" fill="#808080"/><rect x="193" y="58" width="1" height="1" fill="#00FF00"/><rect x="194" y="58" width="1" height="1" fill="#808080"/><rect x="181" y="59" width="1" height="1" fill="#808080"/><rect x="182" y="59" width="2" height="1" fill="#00FF00"/><rect x="184" y="59" width="6" height="1" fill="#808080"/><rect x="190" y="59" width="2" height="1" fill="#00FF00"/><rect x="192" y="59" width="1" height="1" fill="#808080"/><rect x="193" y="59" width="1" height="1" fill="#00FF00"/><rect x="194" y="59" width="1" height="1" fill="#808080"/><rect x="181" y="60" width="1" height="1" fill="#808080"/><rect x="182" y="60" width="2" height="1" fill="#00FF00"/><rect x="184" y="60" width="6" height="1" fill="#808080"/><rect x="190" y="60" width="2" height="1" fill="#00FF00"/><rect x="192" y="60" width="1" height="1" fill="#808080"/><rect x="193" y="60" width="1" height="1" fill="#00FF00"/><rect x="194" y="60" width="1" height="1" fill="#808080"/><rect x="181" y="61" width="14" height="1" fill="#808080"/><rect x="179" y="47" width="6" height="1" fill="#800000"/><rect x="179" y="48" width="7" height="1" fill="#800000"/><rect x="179" y="49" width="3" height="1" fill="#800000"/><rect x="182" y="49" width="1" height="1" fill="#00FF00"/><rect x="183" y="49" width="4" height="1" fill="#800000"/><rect x="179" y="50" width="3" height="1" fill="#800000"/><rect x="182" y="50" width="1" height="1" fill="#00FF00"/><rect x="183" y="50" width="4" height="1" fill="#800000"/><rect x="179" y="51" width="3" height="1" fill="#800000"/><rect x="182" y="51" width="1" height="1" fill="#00FF00"/><rect x="183" y="51" width="4" height="1" fill="#800000"/><rect x="179" y="52" width="3" height="1" fill="#800000"/><rect x="182" y="52" width="1" height="1" fill="#00FF00"/><rect x="183" y="52" width="4" height="1" fill="#800000"/><rect x="179" y="53" width="3" height="1" fill="#800000"/><rect x="182" y="53" width="1" height="1" fill="#00FF00"/><rect x="183" y="53" width="4" height="1" fill="#800000"/><rect x="179" y="54" width="7" height="1" fill="#800000"/><rect x="179" y="55" width="6" height="1" fill="#800000"/><rect x="204" y="48" width="14" height="1" fill="#808080"/><rect x="204" y="49" width="1" height="1" fill="#808080"/><rect x="205" y="49" width="10" height="1" fill="#00FF00"/><rect x="215" y="49" width="1" height="1" fill="#808080"/><rect x="216" y="49" width="1" height="1" fill="#00FFFF"/><rect x="217" y="49" width="1" height="1" fill="#808080"/><rect x="204" y="50" width="1" height="1" fill="#808080"/><rect x="205" y="50" width="10" height="1" fill="#00FF00"/><rect x="215" y="50" width="1" height="1" fill="#808080"/><rect x="216" y="50" width="1" height="1" fill="#00FF00"/><rect x="217" y="50" width="1" height="1" fill="#808080"/><rect x="204" y="51" width="1" height="1" fill="#808080"/><rect x="205" y="51" width="10" height="1" fill="#00FF00"/><rect x="215" y="51" width="1" height="1" fill="#808080"/><rect x="216" y="51" width="1" height="1" fill="#00FF00"/><rect x="217" y="51" width="1" height="1" fill="#808080"/><rect x="204" y="52" width="1" height="1" fill="#808080"/><rect x="205" y="52" width="10" height="1" fill="#00FF00"/><rect x="215" y="52" width="1" height="1" fill="#808080"/><rect x="216" y="52" width="1" height="1" fill="#00FF00"/><rect x="217" y="52" width="1" height="1" fill="#808080"/><rect x="204" y="53" width="1" height="1" fill="#808080"/><rect x="205" y="53" width="10" height="1" fill="#00FF00"/><rect x="215" y="53" width="1" height="1" fill="#808080"/><rect x="216" y="53" width="1" height="1" fill="#00FF00"/><rect x="217" y="53" width="1" height="1" fill="#808080"/><rect x="204" y="54" width="1" height="1" fill="#808080"/><rect x="205" y="54" width="10" height="1" fill="#00FF00"/><rect x="215" y="54" width="1" height="1" fill="#808080"/><rect x="216" y="54" width="1" height="1" fill="#00FF00"/><rect x="217" y="54" width="1" height="1" fill="#808080"/><rect x="204" y="55" width="1" height="1" fill="#808080"/><rect x="205" y="55" width="3" height="1" fill="#00FF00"/><rect x="208" y="55" width="8" height="1" fill="#808080"/><rect x="216" y="55" width="1" height="1" fill="#00FF00"/><rect x="217" y="55" width="1" height="1" fill="#808080"/><rect x="204" y="56" width="1" height="1" fill="#808080"/><rect x="205" y="56" width="12" height="1" fill="#00FF00"/><rect x="217" y="56" width="1" height="1" fill="#808080"/><rect x="204" y="57" width="1" height="1" fill="#808080"/><rect x="205" y="57" width="12" height="1" fill="#00FF00"/><rect x="217" y="57" width="1" height="1" fill="#808080"/><rect x="204" y="58" width="1" height="1" fill="#808080"/><rect x="205" y="58" width="2" height="1" fill="#00FF00"/><rect x="207" y="58" width="6" height="1" fill="#808080"/><rect x="213" y="58" width="2" height="1" fill="#00FF00"/><rect x="215" y="58" width="1" height="1" fill="#808080"/><rect x="216" y="58" width="1" height="1" fill="#00FF00"/><rect x="217" y="58" width="1" height="1" fill="#808080"/><rect x="204" y="59" width="1" height="1" fill="#808080"/><rect x="205" y="59" width="2" height="1" fill="#00FF00"/><rect x="207" y="59" width="6" height="1" fill="#808080"/><rect x="213" y="59" width="2" height="1" fill="#00FF00"/><rect x="215" y="59" width="1" height="1" fill="#808080"/><rect x="216" y="59" width="1" height="1" fill="#00FF00"/><rect x="217" y="59" width="1" height="1" fill="#808080"/><rect x="204" y="60" width="1" height="1" fill="#808080"/><rect x="205" y="60" width="2" height="1" fill="#00FF00"/><rect x="207" y="60" width="6" height="1" fill="#808080"/><rect x="213" y="60" width="2" height="1" fill="#00FF00"/><rect x="215" y="60" width="1" height="1" fill="#808080"/><rect x="216" y="60" width="1" height="1" fill="#00FF00"/><rect x="217" y="60" width="1" height="1" fill="#808080"/><rect x="204" y="61" width="14" height="1" fill="#808080"/><rect x="202" y="47" width="7" height="1" fill="#800000"/><rect x="202" y="48" width="3" height="1" fill="#800000"/><rect x="207" y="48" width="2" height="1" fill="#800000"/><rect x="203" y="49" width="3" height="1" fill="#800000"/><rect x="204" y="50" width="3" height="1" fill="#800000"/><rect x="204" y="51" width="3" height="1" fill="#800000"/><rect x="203" y="52" width="3" height="1" fill="#800000"/><rect x="202" y="53" width="3" height="1" fill="#800000"/><rect x="207" y="53" width="2" height="1" fill="#800000"/><rect x="202" y="54" width="7" height="1" fill="#800000"/><rect x="202" y="55" width="7" height="1" fill="#800000"/><rect x="226" y="48" width="14" height="1" fill="#000000"/><rect x="226" y="49" width="1" height="1" fill="#000000"/><rect x="227" y="49" width="1" height="1" fill="#008000"/><rect x="228" y="49" width="1" height="1" fill="#000000"/><rect x="229" y="49" width="8" height="1" fill="#00FF00"/><rect x="237" y="49" width="1" height="1" fill="#000000"/><rect x="238" y="49" width="1" height="1" fill="#00FFFF"/><rect x="239" y="49" width="1" height="1" fill="#000000"/><rect x="226" y="50" width="1" height="1" fill="#000000"/><rect x="227" y="50" width="1" height="1" fill="#008000"/><rect x="228" y="50" width="1" height="1" fill="#000000"/><rect x="229" y="50" width="8" height="1" fill="#00FF00"/><rect x="237" y="50" width="1" height="1" fill="#000000"/><rect x="238" y="50" width="1" height="1" fill="#008000"/><rect x="239" y="50" width="1" height="1" fill="#000000"/><rect x="226" y="51" width="1" height="1" fill="#000000"/><rect x="227" y="51" width="1" height="1" fill="#008000"/><rect x="228" y="51" width="1" height="1" fill="#000000"/><rect x="229" y="51" width="8" height="1" fill="#00FF00"/><rect x="237" y="51" width="1" height="1" fill="#000000"/><rect x="238" y="51" width="1" height="1" fill="#008000"/><rect x="239" y="51" width="1" height="1" fill="#000000"/><rect x="226" y="52" width="1" height="1" fill="#000000"/><rect x="227" y="52" width="1" height="1" fill="#008000"/><rect x="228" y="52" width="1" height="1" fill="#000000"/><rect x="229" y="52" width="8" height="1" fill="#00FF00"/><rect x="237" y="52" width="1" height="1" fill="#000000"/><rect x="238" y="52" width="1" height="1" fill="#008000"/><rect x="239" y="52" width="1" height="1" fill="#000000"/><rect x="226" y="53" width="1" height="1" fill="#000000"/><rect x="227" y="53" width="1" height="1" fill="#008000"/><rect x="228" y="53" width="1" height="1" fill="#000000"/><rect x="229" y="53" width="8" height="1" fill="#00FF00"/><rect x="237" y="53" width="1" height="1" fill="#000000"/><rect x="238" y="53" width="1" height="1" fill="#008000"/><rect x="239" y="53" width="1" height="1" fill="#000000"/><rect x="226" y="54" width="1" height="1" fill="#000000"/><rect x="227" y="54" width="1" height="1" fill="#008000"/><rect x="228" y="54" width="1" height="1" fill="#000000"/><rect x="229" y="54" width="8" height="1" fill="#00FF00"/><rect x="237" y="54" width="1" height="1" fill="#000000"/><rect x="238" y="54" width="1" height="1" fill="#008000"/><rect x="239" y="54" width="1" height="1" fill="#000000"/><rect x="226" y="55" width="1" height="1" fill="#000000"/><rect x="227" y="55" width="1" height="1" fill="#008000"/><rect x="228" y="55" width="10" height="1" fill="#000000"/><rect x="238" y="55" width="1" height="1" fill="#008000"/><rect x="239" y="55" width="1" height="1" fill="#000000"/><rect x="226" y="56" width="1" height="1" fill="#000000"/><rect x="227" y="56" width="12" height="1" fill="#008000"/><rect x="239" y="56" width="1" height="1" fill="#000000"/><rect x="226" y="57" width="1" height="1" fill="#000000"/><rect x="227" y="57" width="1" height="1" fill="#008000"/><rect x="228" y="57" width="10" height="1" fill="#000000"/><rect x="238" y="57" width="1" height="1" fill="#008000"/><rect x="239" y="57" width="1" height="1" fill="#000000"/><rect x="226" y="58" width="1" height="1" fill="#000000"/><rect x="227" y="58" width="1" height="1" fill="#008000"/><rect x="228" y="58" width="7" height="1" fill="#000000"/><rect x="235" y="58" width="2" height="1" fill="#FFFFFF"/><rect x="237" y="58" width="1" height="1" fill="#000000"/><rect x="238" y="58" width="1" height="1" fill="#008000"/><rect x="239" y="58" width="1" height="1" fill="#000000"/><rect x="226" y="59" width="1" height="1" fill="#000000"/><rect x="227" y="59" width="1" height="1" fill="#008000"/><rect x="228" y="59" width="7" height="1" fill="#000000"/><rect x="235" y="59" width="2" height="1" fill="#FFFFFF"/><rect x="237" y="59" width="1" height="1" fill="#000000"/><rect x="238" y="59" width="1" height="1" fill="#008000"/><rect x="239" y="59" width="1" height="1" fill="#000000"/><rect x="226" y="60" width="1" height="1" fill="#000000"/><rect x="227" y="60" width="1" height="1" fill="#008000"/><rect x="228" y="60" width="7" height="1" fill="#000000"/><rect x="235" y="60" width="2" height="1" fill="#FFFFFF"/><rect x="237" y="60" width="1" height="1" fill="#000000"/><rect x="238" y="60" width="1" height="1" fill="#008000"/><rect x="239" y="60" width="1" height="1" fill="#000000"/><rect x="226" y="61" width="14" height="1" fill="#000000"/><rect x="256" y="47" width="16" height="1" fill="#808080"/><rect x="256" y="48" width="16" height="1" fill="#808080"/><rect x="272" y="48" width="1" height="1" fill="#FFFFFF"/><rect x="257" y="49" width="16" height="1" fill="#FFFFFF"/><rect x="256" y="50" width="3" height="1" fill="#808080"/><rect x="260" y="50" width="6" height="1" fill="#808080"/><rect x="267" y="50" width="5" height="1" fill="#808080"/><rect x="257" y="51" width="3" height="1" fill="#FFFFFF"/><rect x="261" y="51" width="6" height="1" fill="#FFFFFF"/><rect x="268" y="51" width="5" height="1" fill="#FFFFFF"/><rect x="256" y="52" width="3" height="1" fill="#808080"/><rect x="260" y="52" width="6" height="1" fill="#808080"/><rect x="267" y="52" width="5" height="1" fill="#808080"/><rect x="257" y="53" width="3" height="1" fill="#FFFFFF"/><rect x="261" y="53" width="6" height="1" fill="#FFFFFF"/><rect x="268" y="53" width="5" height="1" fill="#FFFFFF"/><rect x="256" y="54" width="3" height="1" fill="#808080"/><rect x="260" y="54" width="6" height="1" fill="#808080"/><rect x="267" y="54" width="5" height="1" fill="#808080"/><rect x="257" y="55" width="3" height="1" fill="#FFFFFF"/><rect x="261" y="55" width="6" height="1" fill="#FFFFFF"/><rect x="268" y="55" width="5" height="1" fill="#FFFFFF"/><rect x="256" y="56" width="3" height="1" fill="#808080"/><rect x="260" y="56" width="6" height="1" fill="#808080"/><rect x="267" y="56" width="5" height="1" fill="#808080"/><rect x="257" y="57" width="3" height="1" fill="#FFFFFF"/><rect x="261" y="57" width="6" height="1" fill="#FFFFFF"/><rect x="268" y="57" width="5" height="1" fill="#FFFFFF"/><rect x="256" y="58" width="3" height="1" fill="#808080"/><rect x="260" y="58" width="6" height="1" fill="#808080"/><rect x="267" y="58" width="5" height="1" fill="#808080"/><rect x="257" y="59" width="3" height="1" fill="#FFFFFF"/><rect x="261" y="59" width="6" height="1" fill="#FFFFFF"/><rect x="268" y="59" width="5" height="1" fill="#FFFFFF"/><rect x="284" y="47" width="5" height="1" fill="#808080"/><rect x="282" y="48" width="9" height="1" fill="#808080"/><rect x="281" y="49" width="11" height="1" fill="#808080"/><rect x="280" y="50" width="13" height="1" fill="#808080"/><rect x="280" y="51" width="13" height="1" fill="#808080"/><rect x="293" y="51" width="1" height="1" fill="#FFFFFF"/><rect x="279" y="52" width="15" height="1" fill="#808080"/><rect x="279" y="53" width="15" height="1" fill="#808080"/><rect x="294" y="53" width="1" height="1" fill="#FFFFFF"/><rect x="279" y="54" width="15" height="1" fill="#808080"/><rect x="294" y="54" width="1" height="1" fill="#FFFFFF"/><rect x="279" y="55" width="15" height="1" fill="#808080"/><rect x="294" y="55" width="1" height="1" fill="#FFFFFF"/><rect x="279" y="56" width="15" height="1" fill="#808080"/><rect x="294" y="56" width="1" height="1" fill="#FFFFFF"/><rect x="280" y="57" width="13" height="1" fill="#808080"/><rect x="293" y="57" width="2" height="1" fill="#FFFFFF"/><rect x="280" y="58" width="13" height="1" fill="#808080"/><rect x="293" y="58" width="1" height="1" fill="#FFFFFF"/><rect x="281" y="59" width="11" height="1" fill="#808080"/><rect x="292" y="59" width="2" height="1" fill="#FFFFFF"/><rect x="282" y="60" width="9" height="1" fill="#808080"/><rect x="291" y="60" width="2" height="1" fill="#FFFFFF"/><rect x="283" y="61" width="1" height="1" fill="#FFFFFF"/><rect x="284" y="61" width="5" height="1" fill="#808080"/><rect x="289" y="61" width="3" height="1" fill="#FFFFFF"/><rect x="285" y="62" width="5" height="1" fill="#FFFFFF"/><rect x="310" y="47" width="7" height="1" fill="#000000"/><rect x="319" y="47" width="7" height="1" fill="#000000"/><rect x="310" y="48" width="1" height="1" fill="#000000"/><rect x="311" y="48" width="5" height="1" fill="#00FF00"/><rect x="316" y="48" width="1" height="1" fill="#000000"/><rect x="319" y="48" width="1" height="1" fill="#000000"/><rect x="320" y="48" width="5" height="1" fill="#00FF00"/><rect x="325" y="48" width="1" height="1" fill="#000000"/><rect x="310" y="49" width="1" height="1" fill="#000000"/><rect x="311" y="49" width="1" height="1" fill="#FFFFFF"/><rect x="312" y="49" width="1" height="1" fill="#00FF00"/><rect x="313" y="49" width="3" height="1" fill="#008000"/><rect x="316" y="49" width="1" height="1" fill="#000000"/><rect x="319" y="49" width="1" height="1" fill="#000000"/><rect x="320" y="49" width="1" height="1" fill="#FFFFFF"/><rect x="321" y="49" width="1" height="1" fill="#00FF00"/><rect x="322" y="49" width="3" height="1" fill="#008000"/><rect x="325" y="49" width="1" height="1" fill="#000000"/><rect x="310" y="50" width="1" height="1" fill="#000000"/><rect x="311" y="50" width="1" height="1" fill="#FFFFFF"/><rect x="312" y="50" width="1" height="1" fill="#00FF00"/><rect x="313" y="50" width="3" height="1" fill="#008000"/><rect x="316" y="50" width="1" height="1" fill="#000000"/><rect x="319" y="50" width="1" height="1" fill="#000000"/><rect x="320" y="50" width="1" height="1" fill="#FFFFFF"/><rect x="321" y="50" width="1" height="1" fill="#00FF00"/><rect x="322" y="50" width="3" height="1" fill="#008000"/><rect x="325" y="50" width="1" height="1" fill="#000000"/><rect x="310" y="51" width="1" height="1" fill="#000000"/><rect x="311" y="51" width="1" height="1" fill="#FFFFFF"/><rect x="312" y="51" width="1" height="1" fill="#00FF00"/><rect x="313" y="51" width="3" height="1" fill="#008000"/><rect x="316" y="51" width="1" height="1" fill="#000000"/><rect x="319" y="51" width="1" height="1" fill="#000000"/><rect x="320" y="51" width="1" height="1" fill="#FFFFFF"/><rect x="321" y="51" width="1" height="1" fill="#00FF00"/><rect x="322" y="51" width="3" height="1" fill="#008000"/><rect x="325" y="51" width="1" height="1" fill="#000000"/><rect x="310" y="52" width="1" height="1" fill="#000000"/><rect x="311" y="52" width="1" height="1" fill="#FFFFFF"/><rect x="312" y="52" width="1" height="1" fill="#00FF00"/><rect x="313" y="52" width="3" height="1" fill="#008000"/><rect x="316" y="52" width="1" height="1" fill="#000000"/><rect x="319" y="52" width="1" height="1" fill="#000000"/><rect x="320" y="52" width="1" height="1" fill="#FFFFFF"/><rect x="321" y="52" width="1" height="1" fill="#00FF00"/><rect x="322" y="52" width="3" height="1" fill="#008000"/><rect x="325" y="52" width="1" height="1" fill="#000000"/><rect x="310" y="53" width="1" height="1" fill="#000000"/><rect x="311" y="53" width="2" height="1" fill="#00FF00"/><rect x="313" y="53" width="3" height="1" fill="#008000"/><rect x="316" y="53" width="4" height="1" fill="#000000"/><rect x="320" y="53" width="2" height="1" fill="#00FF00"/><rect x="322" y="53" width="3" height="1" fill="#008000"/><rect x="325" y="53" width="1" height="1" fill="#000000"/><rect x="310" y="54" width="16" height="1" fill="#000000"/><rect x="311" y="55" width="1" height="1" fill="#000000"/><rect x="312" y="55" width="1" height="1" fill="#FFFFFF"/><rect x="313" y="55" width="3" height="1" fill="#008000"/><rect x="316" y="55" width="4" height="1" fill="#000000"/><rect x="320" y="55" width="1" height="1" fill="#FFFFFF"/><rect x="321" y="55" width="3" height="1" fill="#008000"/><rect x="324" y="55" width="1" height="1" fill="#000000"/><rect x="311" y="56" width="1" height="1" fill="#000000"/><rect x="312" y="56" width="4" height="1" fill="#008000"/><rect x="316" y="56" width="4" height="1" fill="#000000"/><rect x="320" y="56" width="4" height="1" fill="#008000"/><rect x="324" y="56" width="1" height="1" fill="#000000"/><rect x="311" y="57" width="1" height="1" fill="#000000"/><rect x="312" y="57" width="4" height="1" fill="#008000"/><rect x="316" y="57" width="1" height="1" fill="#000000"/><rect x="319" y="57" width="1" height="1" fill="#000000"/><rect x="320" y="57" width="4" height="1" fill="#008000"/><rect x="324" y="57" width="1" height="1" fill="#000000"/><rect x="311" y="58" width="6" height="1" fill="#000000"/><rect x="319" y="58" width="6" height="1" fill="#000000"/><rect x="312" y="59" width="4" height="1" fill="#000000"/><rect x="320" y="59" width="4" height="1" fill="#000000"/><rect x="312" y="60" width="1" height="1" fill="#000000"/><rect x="313" y="60" width="2" height="1" fill="#008000"/><rect x="315" y="60" width="1" height="1" fill="#000000"/><rect x="320" y="60" width="1" height="1" fill="#000000"/><rect x="321" y="60" width="2" height="1" fill="#008000"/><rect x="323" y="60" width="1" height="1" fill="#000000"/><rect x="311" y="61" width="6" height="1" fill="#000000"/><rect x="319" y="61" width="6" height="1" fill="#000000"/><rect x="333" y="47" width="5" height="1" fill="#000000"/><rect x="340" y="47" width="5" height="1" fill="#000000"/><rect x="333" y="48" width="1" height="1" fill="#000000"/><rect x="334" y="48" width="1" height="1" fill="#00FF00"/><rect x="335" y="48" width="2" height="1" fill="#008000"/><rect x="337" y="48" width="1" height="1" fill="#000000"/><rect x="340" y="48" width="1" height="1" fill="#000000"/><rect x="341" y="48" width="1" height="1" fill="#00FF00"/><rect x="342" y="48" width="2" height="1" fill="#008000"/><rect x="344" y="48" width="1" height="1" fill="#000000"/><rect x="333" y="49" width="1" height="1" fill="#000000"/><rect x="334" y="49" width="1" height="1" fill="#00FF00"/><rect x="335" y="49" width="2" height="1" fill="#008000"/><rect x="337" y="49" width="1" height="1" fill="#000000"/><rect x="340" y="49" width="1" height="1" fill="#000000"/><rect x="341" y="49" width="1" height="1" fill="#00FF00"/><rect x="342" y="49" width="2" height="1" fill="#008000"/><rect x="344" y="49" width="1" height="1" fill="#000000"/><rect x="333" y="50" width="1" height="1" fill="#000000"/><rect x="334" y="50" width="1" height="1" fill="#00FF00"/><rect x="335" y="50" width="2" height="1" fill="#008000"/><rect x="337" y="50" width="1" height="1" fill="#000000"/><rect x="340" y="50" width="1" height="1" fill="#000000"/><rect x="341" y="50" width="1" height="1" fill="#00FF00"/><rect x="342" y="50" width="2" height="1" fill="#008000"/><rect x="344" y="50" width="1" height="1" fill="#000000"/><rect x="333" y="51" width="1" height="1" fill="#000000"/><rect x="334" y="51" width="1" height="1" fill="#00FF00"/><rect x="335" y="51" width="2" height="1" fill="#008000"/><rect x="337" y="51" width="1" height="1" fill="#000000"/><rect x="340" y="51" width="1" height="1" fill="#000000"/><rect x="341" y="51" width="1" height="1" fill="#00FF00"/><rect x="342" y="51" width="2" height="1" fill="#008000"/><rect x="344" y="51" width="1" height="1" fill="#000000"/><rect x="333" y="52" width="5" height="1" fill="#000000"/><rect x="340" y="52" width="5" height="1" fill="#000000"/><rect x="334" y="53" width="1" height="1" fill="#000000"/><rect x="335" y="53" width="2" height="1" fill="#00FF00"/><rect x="337" y="53" width="4" height="1" fill="#000000"/><rect x="341" y="53" width="2" height="1" fill="#00FF00"/><rect x="343" y="53" width="1" height="1" fill="#000000"/><rect x="334" y="54" width="1" height="1" fill="#000000"/><rect x="335" y="54" width="2" height="1" fill="#00FF00"/><rect x="337" y="54" width="4" height="1" fill="#000000"/><rect x="341" y="54" width="2" height="1" fill="#00FF00"/><rect x="343" y="54" width="1" height="1" fill="#000000"/><rect x="334" y="55" width="4" height="1" fill="#000000"/><rect x="340" y="55" width="4" height="1" fill="#000000"/><rect x="335" y="56" width="2" height="1" fill="#000000"/><rect x="341" y="56" width="2" height="1" fill="#000000"/><rect x="334" y="57" width="4" height="1" fill="#000000"/><rect x="340" y="57" width="4" height="1" fill="#000000"/><rect x="345" y="54" width="3" height="1" fill="#800000"/><rect x="345" y="55" width="3" height="1" fill="#800000"/><rect x="345" y="56" width="3" height="1" fill="#800000"/><rect x="345" y="57" width="3" height="1" fill="#800000"/><rect x="344" y="58" width="5" height="1" fill="#800000"/><rect x="344" y="59" width="5" height="1" fill="#800000"/><rect x="345" y="60" width="3" height="1" fill="#800000"/><rect x="346" y="61" width="1" height="1" fill="#800000"/><rect x="356" y="47" width="5" height="1" fill="#000000"/><rect x="363" y="47" width="5" height="1" fill="#000000"/><rect x="356" y="48" width="1" height="1" fill="#000000"/><rect x="357" y="48" width="1" height="1" fill="#00FF00"/><rect x="358" y="48" width="2" height="1" fill="#008000"/><rect x="360" y="48" width="1" height="1" fill="#000000"/><rect x="363" y="48" width="1" height="1" fill="#000000"/><rect x="364" y="48" width="1" height="1" fill="#00FF00"/><rect x="365" y="48" width="2" height="1" fill="#008000"/><rect x="367" y="48" width="1" height="1" fill="#000000"/><rect x="356" y="49" width="1" height="1" fill="#000000"/><rect x="357" y="49" width="1" height="1" fill="#00FF00"/><rect x="358" y="49" width="2" height="1" fill="#008000"/><rect x="360" y="49" width="1" height="1" fill="#000000"/><rect x="363" y="49" width="1" height="1" fill="#000000"/><rect x="364" y="49" width="1" height="1" fill="#00FF00"/><rect x="365" y="49" width="2" height="1" fill="#008000"/><rect x="367" y="49" width="1" height="1" fill="#000000"/><rect x="356" y="50" width="1" height="1" fill="#000000"/><rect x="357" y="50" width="1" height="1" fill="#00FF00"/><rect x="358" y="50" width="2" height="1" fill="#008000"/><rect x="360" y="50" width="1" height="1" fill="#000000"/><rect x="363" y="50" width="1" height="1" fill="#000000"/><rect x="364" y="50" width="1" height="1" fill="#00FF00"/><rect x="365" y="50" width="2" height="1" fill="#008000"/><rect x="367" y="50" width="1" height="1" fill="#000000"/><rect x="356" y="51" width="1" height="1" fill="#000000"/><rect x="357" y="51" width="1" height="1" fill="#00FF00"/><rect x="358" y="51" width="2" height="1" fill="#008000"/><rect x="360" y="51" width="1" height="1" fill="#000000"/><rect x="363" y="51" width="1" height="1" fill="#000000"/><rect x="364" y="51" width="1" height="1" fill="#00FF00"/><rect x="365" y="51" width="2" height="1" fill="#008000"/><rect x="367" y="51" width="1" height="1" fill="#000000"/><rect x="356" y="52" width="5" height="1" fill="#000000"/><rect x="363" y="52" width="5" height="1" fill="#000000"/><rect x="357" y="53" width="1" height="1" fill="#000000"/><rect x="358" y="53" width="2" height="1" fill="#00FF00"/><rect x="360" y="53" width="4" height="1" fill="#000000"/><rect x="364" y="53" width="2" height="1" fill="#00FF00"/><rect x="366" y="53" width="1" height="1" fill="#000000"/><rect x="357" y="54" width="1" height="1" fill="#000000"/><rect x="358" y="54" width="2" height="1" fill="#00FF00"/><rect x="360" y="54" width="4" height="1" fill="#000000"/><rect x="364" y="54" width="2" height="1" fill="#00FF00"/><rect x="366" y="54" width="1" height="1" fill="#000000"/><rect x="357" y="55" width="4" height="1" fill="#000000"/><rect x="363" y="55" width="4" height="1" fill="#000000"/><rect x="358" y="56" width="2" height="1" fill="#000000"/><rect x="364" y="56" width="2" height="1" fill="#000000"/><rect x="357" y="57" width="4" height="1" fill="#000000"/><rect x="363" y="57" width="4" height="1" fill="#000000"/><rect x="369" y="54" width="1" height="1" fill="#800000"/><rect x="368" y="55" width="3" height="1" fill="#800000"/><rect x="367" y="56" width="5" height="1" fill="#800000"/><rect x="367" y="57" width="5" height="1" fill="#800000"/><rect x="368" y="58" width="3" height="1" fill="#800000"/><rect x="368" y="59" width="3" height="1" fill="#800000"/><rect x="368" y="60" width="3" height="1" fill="#800000"/><rect x="368" y="61" width="3" height="1" fill="#800000"/><rect x="391" y="47" width="8" height="1" fill="#008000"/><rect x="388" y="48" width="3" height="1" fill="#008000"/><rect x="391" y="48" width="8" height="1" fill="#00FF00"/><rect x="399" y="48" width="3" height="1" fill="#008000"/><rect x="388" y="49" width="2" height="1" fill="#008000"/><rect x="390" y="49" width="10" height="1" fill="#00FF00"/><rect x="400" y="49" width="2" height="1" fill="#008000"/><rect x="389" y="50" width="2" height="1" fill="#008000"/><rect x="391" y="50" width="8" height="1" fill="#00FF00"/><rect x="399" y="50" width="2" height="1" fill="#008000"/><rect x="390" y="51" width="10" height="1" fill="#008000"/><rect x="391" y="52" width="8" height="1" fill="#008000"/><rect x="392" y="53" width="6" height="1" fill="#008000"/><rect x="393" y="54" width="4" height="1" fill="#008000"/><rect x="394" y="55" width="2" height="1" fill="#008000"/><rect x="388" y="56" width="4" height="1" fill="#800000"/><rect x="393" y="56" width="4" height="1" fill="#800000"/><rect x="398" y="56" width="5" height="1" fill="#800000"/><rect x="387" y="57" width="2" height="1" fill="#800000"/><rect x="393" y="57" width="2" height="1" fill="#800000"/><rect x="399" y="57" width="2" height="1" fill="#800000"/><rect x="388" y="58" width="3" height="1" fill="#800000"/><rect x="393" y="58" width="3" height="1" fill="#800000"/><rect x="399" y="58" width="2" height="1" fill="#800000"/><rect x="390" y="59" width="2" height="1" fill="#800000"/><rect x="393" y="59" width="2" height="1" fill="#800000"/><rect x="399" y="59" width="2" height="1" fill="#800000"/><rect x="387" y="60" width="1" height="1" fill="#800000"/><rect x="390" y="60" width="2" height="1" fill="#800000"/><rect x="393" y="60" width="2" height="1" fill="#800000"/><rect x="399" y="60" width="2" height="1" fill="#800000"/><rect x="387" y="61" width="4" height="1" fill="#800000"/><rect x="393" y="61" width="4" height="1" fill="#800000"/><rect x="399" y="61" width="2" height="1" fill="#800000"/><rect x="412" y="47" width="1" height="1" fill="#00FF00"/><rect x="414" y="47" width="6" height="1" fill="#000000"/><rect x="420" y="47" width="1" height="1" fill="#00FF00"/><rect x="421" y="47" width="1" height="1" fill="#000000"/><rect x="424" y="47" width="1" height="1" fill="#00FF00"/><rect x="411" y="48" width="2" height="1" fill="#000000"/><rect x="413" y="48" width="1" height="1" fill="#00FF00"/><rect x="416" y="48" width="1" height="1" fill="#00FF00"/><rect x="419" y="48" width="1" height="1" fill="#00FF00"/><rect x="422" y="48" width="1" height="1" fill="#00FF00"/><rect x="423" y="48" width="2" height="1" fill="#000000"/><rect x="410" y="49" width="1" height="1" fill="#000000"/><rect x="414" y="49" width="1" height="1" fill="#00FF00"/><rect x="416" y="49" width="1" height="1" fill="#00FF00"/><rect x="419" y="49" width="1" height="1" fill="#00FF00"/><rect x="421" y="49" width="1" height="1" fill="#00FF00"/><rect x="425" y="49" width="1" height="1" fill="#000000"/><rect x="411" y="50" width="4" height="1" fill="#008000"/><rect x="415" y="50" width="1" height="1" fill="#00FF00"/><rect x="416" y="50" width="1" height="1" fill="#008000"/><rect x="417" y="50" width="1" height="1" fill="#00FF00"/><rect x="418" y="50" width="1" height="1" fill="#008000"/><rect x="419" y="50" width="1" height="1" fill="#00FF00"/><rect x="420" y="50" width="5" height="1" fill="#008000"/><rect x="412" y="51" width="12" height="1" fill="#008000"/><rect x="413" y="52" width="10" height="1" fill="#008000"/><rect x="414" y="53" width="8" height="1" fill="#008000"/><rect x="415" y="54" width="6" height="1" fill="#008000"/><rect x="421" y="54" width="5" height="1" fill="#800000"/><rect x="416" y="55" width="4" height="1" fill="#008000"/><rect x="421" y="55" width="5" height="1" fill="#800000"/><rect x="416" y="56" width="4" height="1" fill="#008000"/><rect x="421" y="56" width="2" height="1" fill="#800000"/><rect x="416" y="57" width="4" height="1" fill="#008000"/><rect x="421" y="57" width="4" height="1" fill="#800000"/><rect x="416" y="58" width="4" height="1" fill="#008000"/><rect x="421" y="58" width="4" height="1" fill="#800000"/><rect x="416" y="59" width="4" height="1" fill="#008000"/><rect x="421" y="59" width="2" height="1" fill="#800000"/><rect x="417" y="60" width="2" height="1" fill="#00FF00"/><rect x="421" y="60" width="2" height="1" fill="#800000"/><rect x="417" y="61" width="2" height="1" fill="#00FF00"/><rect x="421" y="61" width="2" height="1" fill="#800000"/><rect x="436" y="47" width="10" height="1" fill="#808080"/><rect x="434" y="48" width="2" height="1" fill="#808080"/><rect x="437" y="48" width="1" height="1" fill="#FFFFFF"/><rect x="438" y="48" width="1" height="1" fill="#808080"/><rect x="439" y="48" width="1" height="1" fill="#FFFFFF"/><rect x="440" y="48" width="2" height="1" fill="#808080"/><rect x="442" y="48" width="1" height="1" fill="#FFFFFF"/><rect x="443" y="48" width="1" height="1" fill="#808080"/><rect x="444" y="48" width="2" height="1" fill="#FFFFFF"/><rect x="446" y="48" width="2" height="1" fill="#808080"/><rect x="433" y="49" width="1" height="1" fill="#808080"/><rect x="435" y="49" width="2" height="1" fill="#FFFFFF"/><rect x="437" y="49" width="1" height="1" fill="#808080"/><rect x="439" y="49" width="1" height="1" fill="#FFFFFF"/><rect x="440" y="49" width="1" height="1" fill="#808080"/><rect x="441" y="49" width="1" height="1" fill="#FFFFFF"/><rect x="442" y="49" width="1" height="1" fill="#808080"/><rect x="444" y="49" width="1" height="1" fill="#FFFFFF"/><rect x="445" y="49" width="1" height="1" fill="#808080"/><rect x="447" y="49" width="1" height="1" fill="#FFFFFF"/><rect x="448" y="49" width="1" height="1" fill="#808080"/><rect x="434" y="50" width="14" height="1" fill="#808080"/><rect x="449" y="50" width="1" height="1" fill="#FFFFFF"/><rect x="435" y="51" width="12" height="1" fill="#808080"/><rect x="447" y="51" width="2" height="1" fill="#FFFFFF"/><rect x="433" y="52" width="1" height="1" fill="#808080"/><rect x="436" y="52" width="10" height="1" fill="#808080"/><rect x="446" y="52" width="2" height="1" fill="#FFFFFF"/><rect x="448" y="52" width="1" height="1" fill="#808080"/><rect x="433" y="53" width="3" height="1" fill="#808080"/><rect x="437" y="53" width="8" height="1" fill="#808080"/><rect x="445" y="53" width="1" height="1" fill="#FFFFFF"/><rect x="446" y="53" width="3" height="1" fill="#808080"/><rect x="449" y="53" width="1" height="1" fill="#FFFFFF"/><rect x="434" y="54" width="2" height="1" fill="#FFFFFF"/><rect x="436" y="54" width="10" height="1" fill="#808080"/><rect x="447" y="54" width="3" height="1" fill="#FFFFFF"/><rect x="437" y="55" width="2" height="1" fill="#FFFFFF"/><rect x="439" y="55" width="4" height="1" fill="#808080"/><rect x="443" y="55" width="4" height="1" fill="#FFFFFF"/><rect x="437" y="56" width="8" height="1" fill="#808080"/><rect x="435" y="57" width="3" height="1" fill="#808080"/><rect x="438" y="57" width="1" height="1" fill="#FFFFFF"/><rect x="439" y="57" width="4" height="1" fill="#808080"/><rect x="443" y="57" width="1" height="1" fill="#FFFFFF"/><rect x="444" y="57" width="3" height="1" fill="#808080"/><rect x="433" y="58" width="3" height="1" fill="#808080"/><rect x="436" y="58" width="3" height="1" fill="#FFFFFF"/><rect x="439" y="58" width="4" height="1" fill="#808080"/><rect x="443" y="58" width="1" height="1" fill="#FFFFFF"/><rect x="445" y="58" width="1" height="1" fill="#FFFFFF"/><rect x="446" y="58" width="3" height="1" fill="#808080"/><rect x="433" y="59" width="1" height="1" fill="#808080"/><rect x="434" y="59" width="3" height="1" fill="#FFFFFF"/><rect x="439" y="59" width="4" height="1" fill="#808080"/><rect x="443" y="59" width="1" height="1" fill="#FFFFFF"/><rect x="447" y="59" width="1" height="1" fill="#FFFFFF"/><rect x="448" y="59" width="1" height="1" fill="#808080"/><rect x="449" y="59" width="1" height="1" fill="#FFFFFF"/><rect x="434" y="60" width="1" height="1" fill="#FFFFFF"/><rect x="439" y="60" width="4" height="1" fill="#808080"/><rect x="443" y="60" width="1" height="1" fill="#FFFFFF"/><rect x="449" y="60" width="1" height="1" fill="#FFFFFF"/><rect x="440" y="61" width="4" height="1" fill="#FFFFFF"/><rect x="473" y="47" width="5" height="1" fill="#808080"/><rect x="472" y="48" width="2" height="1" fill="#808080"/><rect x="474" y="48" width="3" height="1" fill="#FFFFFF"/><rect x="477" y="48" width="2" height="1" fill="#808080"/><rect x="472" y="49" width="2" height="1" fill="#808080"/><rect x="474" y="49" width="1" height="1" fill="#FFFFFF"/><rect x="478" y="49" width="2" height="1" fill="#FFFFFF"/><rect x="472" y="50" width="2" height="1" fill="#808080"/><rect x="474" y="50" width="1" height="1" fill="#FFFFFF"/><rect x="472" y="51" width="2" height="1" fill="#808080"/><rect x="474" y="51" width="1" height="1" fill="#FFFFFF"/><rect x="472" y="52" width="2" height="1" fill="#808080"/><rect x="474" y="52" width="1" height="1" fill="#FFFFFF"/><rect x="477" y="52" width="2" height="1" fill="#808080"/><rect x="472" y="53" width="6" height="1" fill="#808080"/><rect x="478" y="53" width="2" height="1" fill="#FFFFFF"/><rect x="464" y="54" width="8" height="1" fill="#808080"/><rect x="473" y="54" width="6" height="1" fill="#FFFFFF"/><rect x="465" y="55" width="5" height="1" fill="#FFFFFF"/><rect x="470" y="55" width="1" height="1" fill="#808080"/><rect x="471" y="55" width="2" height="1" fill="#FFFFFF"/><rect x="469" y="56" width="1" height="1" fill="#808080"/><rect x="471" y="56" width="1" height="1" fill="#FFFFFF"/><rect x="468" y="57" width="1" height="1" fill="#808080"/><rect x="470" y="57" width="1" height="1" fill="#FFFFFF"/><rect x="475" y="57" width="1" height="1" fill="#808080"/><rect x="467" y="58" width="1" height="1" fill="#808080"/><rect x="469" y="58" width="1" height="1" fill="#FFFFFF"/><rect x="475" y="58" width="2" height="1" fill="#808080"/><rect x="466" y="59" width="13" height="1" fill="#808080"/><rect x="467" y="60" width="8" height="1" fill="#FFFFFF"/><rect x="475" y="60" width="2" height="1" fill="#808080"/><rect x="477" y="60" width="3" height="1" fill="#FFFFFF"/><rect x="475" y="61" width="1" height="1" fill="#808080"/><rect x="476" y="61" width="2" height="1" fill="#FFFFFF"/><rect x="476" y="62" width="1" height="1" fill="#FFFFFF"/><rect x="496" y="47" width="5" height="1" fill="#808080"/><rect x="496" y="48" width="2" height="1" fill="#808080"/><rect x="498" y="48" width="2" height="1" fill="#FFFFFF"/><rect x="500" y="48" width="2" height="1" fill="#808080"/><rect x="496" y="49" width="2" height="1" fill="#808080"/><rect x="498" y="49" width="1" height="1" fill="#FFFFFF"/><rect x="500" y="49" width="2" height="1" fill="#808080"/><rect x="502" y="49" width="1" height="1" fill="#FFFFFF"/><rect x="496" y="50" width="2" height="1" fill="#808080"/><rect x="498" y="50" width="1" height="1" fill="#FFFFFF"/><rect x="500" y="50" width="2" height="1" fill="#808080"/><rect x="502" y="50" width="1" height="1" fill="#FFFFFF"/><rect x="496" y="51" width="2" height="1" fill="#808080"/><rect x="498" y="51" width="1" height="1" fill="#FFFFFF"/><rect x="500" y="51" width="2" height="1" fill="#808080"/><rect x="502" y="51" width="1" height="1" fill="#FFFFFF"/><rect x="496" y="52" width="2" height="1" fill="#808080"/><rect x="498" y="52" width="1" height="1" fill="#FFFFFF"/><rect x="500" y="52" width="2" height="1" fill="#808080"/><rect x="502" y="52" width="1" height="1" fill="#FFFFFF"/><rect x="496" y="53" width="5" height="1" fill="#808080"/><rect x="501" y="53" width="2" height="1" fill="#FFFFFF"/><rect x="487" y="54" width="8" height="1" fill="#808080"/><rect x="497" y="54" width="5" height="1" fill="#FFFFFF"/><rect x="488" y="55" width="5" height="1" fill="#FFFFFF"/><rect x="493" y="55" width="1" height="1" fill="#808080"/><rect x="494" y="55" width="2" height="1" fill="#FFFFFF"/><rect x="492" y="56" width="1" height="1" fill="#808080"/><rect x="494" y="56" width="1" height="1" fill="#FFFFFF"/><rect x="491" y="57" width="1" height="1" fill="#808080"/><rect x="493" y="57" width="1" height="1" fill="#FFFFFF"/><rect x="497" y="57" width="1" height="1" fill="#808080"/><rect x="499" y="57" width="1" height="1" fill="#808080"/><rect x="490" y="58" width="1" height="1" fill="#808080"/><rect x="492" y="58" width="1" height="1" fill="#FFFFFF"/><rect x="498" y="58" width="1" height="1" fill="#808080"/><rect x="500" y="58" width="1" height="1" fill="#FFFFFF"/><rect x="489" y="59" width="14" height="1" fill="#808080"/><rect x="490" y="60" width="7" height="1" fill="#FFFFFF"/><rect x="497" y="60" width="1" height="1" fill="#808080"/><rect x="498" y="60" width="1" height="1" fill="#FFFFFF"/><rect x="499" y="60" width="1" height="1" fill="#808080"/><rect x="500" y="60" width="4" height="1" fill="#FFFFFF"/><rect x="498" y="61" width="1" height="1" fill="#FFFFFF"/><rect x="500" y="61" width="1" height="1" fill="#FFFFFF"/><rect x="513" y="47" width="1" height="1" fill="#800000"/><rect x="517" y="47" width="1" height="1" fill="#FFFF00"/><rect x="520" y="47" width="1" height="1" fill="#FFFF00"/><rect x="512" y="48" width="2" height="1" fill="#800000"/><rect x="515" y="48" width="1" height="1" fill="#FFFF00"/><rect x="518" y="48" width="1" height="1" fill="#FFFF00"/><rect x="520" y="48" width="1" height="1" fill="#FFFF00"/><rect x="510" y="49" width="4" height="1" fill="#800000"/><rect x="516" y="49" width="1" height="1" fill="#FFFF00"/><rect x="518" y="49" width="1" height="1" fill="#FFFF00"/><rect x="520" y="49" width="1" height="1" fill="#FFFF00"/><rect x="510" y="50" width="4" height="1" fill="#800000"/><rect x="514" y="50" width="1" height="1" fill="#FFFF00"/><rect x="516" y="50" width="1" height="1" fill="#FFFF00"/><rect x="518" y="50" width="1" height="1" fill="#FFFF00"/><rect x="520" y="50" width="1" height="1" fill="#FFFF00"/><rect x="510" y="51" width="4" height="1" fill="#800000"/><rect x="514" y="51" width="1" height="1" fill="#FFFF00"/><rect x="516" y="51" width="1" height="1" fill="#FFFF00"/><rect x="518" y="51" width="1" height="1" fill="#FFFF00"/><rect x="520" y="51" width="1" height="1" fill="#FFFF00"/><rect x="510" y="52" width="4" height="1" fill="#800000"/><rect x="516" y="52" width="1" height="1" fill="#FFFF00"/><rect x="518" y="52" width="1" height="1" fill="#FFFF00"/><rect x="520" y="52" width="1" height="1" fill="#FFFF00"/><rect x="512" y="53" width="2" height="1" fill="#800000"/><rect x="515" y="53" width="1" height="1" fill="#FFFF00"/><rect x="518" y="53" width="1" height="1" fill="#FFFF00"/><rect x="520" y="53" width="1" height="1" fill="#FFFF00"/><rect x="513" y="54" width="1" height="1" fill="#800000"/><rect x="517" y="54" width="1" height="1" fill="#FFFF00"/><rect x="520" y="54" width="1" height="1" fill="#FFFF00"/><rect x="519" y="55" width="1" height="1" fill="#FFFF00"/><rect x="510" y="56" width="4" height="1" fill="#800000"/><rect x="516" y="56" width="4" height="1" fill="#800000"/><rect x="522" y="56" width="3" height="1" fill="#800000"/><rect x="510" y="57" width="2" height="1" fill="#800000"/><rect x="513" y="57" width="2" height="1" fill="#800000"/><rect x="516" y="57" width="2" height="1" fill="#800000"/><rect x="519" y="57" width="2" height="1" fill="#800000"/><rect x="522" y="57" width="4" height="1" fill="#800000"/><rect x="510" y="58" width="2" height="1" fill="#800000"/><rect x="513" y="58" width="2" height="1" fill="#800000"/><rect x="516" y="58" width="2" height="1" fill="#800000"/><rect x="519" y="58" width="2" height="1" fill="#800000"/><rect x="522" y="58" width="1" height="1" fill="#800000"/><rect x="524" y="58" width="2" height="1" fill="#800000"/><rect x="510" y="59" width="4" height="1" fill="#800000"/><rect x="516" y="59" width="2" height="1" fill="#800000"/><rect x="519" y="59" width="2" height="1" fill="#800000"/><rect x="522" y="59" width="4" height="1" fill="#800000"/><rect x="510" y="60" width="2" height="1" fill="#800000"/><rect x="516" y="60" width="2" height="1" fill="#800000"/><rect x="519" y="60" width="2" height="1" fill="#800000"/><rect x="522" y="60" width="2" height="1" fill="#800000"/><rect x="525" y="60" width="1" height="1" fill="#800000"/><rect x="510" y="61" width="2" height="1" fill="#800000"/><rect x="516" y="61" width="4" height="1" fill="#800000"/><rect x="522" y="61" width="2" height="1" fill="#800000"/><rect x="525" y="61" width="1" height="1" fill="#800000"/></svg>
<div style="left:542px;top:45px;width:100px;height:20px;background:#000;"></div>
<div style="left:543px;top:46px;width:98px;height:18px;background:#FFFFFF;"></div>
<span style="left:545px;top:48px;font-size:11px;color:#000;font-weight:normal;font-family:'Liberation Sans';font-size:12px;transform:scaleX(0.9167);transform-origin:0 0;">0</span>
<div style="left:647px;top:45px;width:55px;height:20px;background:#D4D0C8;"></div>
<div style="left:647px;top:45px;width:55px;height:1px;background:#FFFFFF;"></div>
<div style="left:647px;top:45px;width:1px;height:20px;background:#FFFFFF;"></div>
<div style="left:648px;top:46px;width:53px;height:1px;background:#D4D0C8;"></div>
<div style="left:648px;top:46px;width:1px;height:18px;background:#D4D0C8;"></div>
<div style="left:648px;top:63px;width:53px;height:1px;background:#808080;"></div>
<div style="left:700px;top:46px;width:1px;height:18px;background:#808080;"></div>
<div style="left:647px;top:64px;width:55px;height:1px;background:#404040;"></div>
<div style="left:701px;top:45px;width:1px;height:20px;background:#404040;"></div>
<span style="left:658px;top:49px;font-size:11px;color:#000;font-weight:normal;font-family:'Liberation Sans';font-family:'Liberation Mono';font-size:13.33px;line-height:14px;">GoTo</span>
<div style="left:7px;top:66px;width:782px;height:1px;background:#808080;"></div>
<div style="left:7px;top:66px;width:1px;height:157px;background:#808080;"></div>
<div style="left:8px;top:67px;width:780px;height:1px;background:#404040;"></div>
<div style="left:8px;top:67px;width:1px;height:155px;background:#404040;"></div>
<div style="left:8px;top:221px;width:780px;height:1px;background:#D4D0C8;"></div>
<div style="left:787px;top:67px;width:1px;height:155px;background:#D4D0C8;"></div>
<div style="left:7px;top:222px;width:782px;height:1px;background:#FFFFFF;"></div>
<div style="left:788px;top:66px;width:1px;height:157px;background:#FFFFFF;"></div>
<div style="left:9px;top:68px;width:778px;height:153px;background:#FFFFFF;"></div>
<div style="left:9px;top:68px;width:35px;height:17px;background:#D4D0C8;"></div>
<div style="left:9px;top:68px;width:35px;height:1px;background:#FFFFFF;"></div>
<div style="left:9px;top:68px;width:1px;height:17px;background:#FFFFFF;"></div>
<div style="left:10px;top:83px;width:33px;height:1px;background:#808080;"></div>
<div style="left:42px;top:69px;width:1px;height:15px;background:#808080;"></div>
<div style="left:9px;top:84px;width:35px;height:1px;background:#404040;"></div>
<div style="left:43px;top:68px;width:1px;height:17px;background:#404040;"></div>
<span style="left:15px;top:71px;font-size:11px;color:#000;font-weight:normal;font-family:'Liberation Sans';font-size:12px;transform:scaleX(0.9167);transform-origin:0 0;">Dev</span>
<div style="left:44px;top:68px;width:35px;height:17px;background:#D4D0C8;"></div>
<div style="left:44px;top:68px;width:35px;height:1px;background:#FFFFFF;"></div>
<div style="left:44px;top:68px;width:1px;height:17px;background:#FFFFFF;"></div>
<div style="left:45px;top:83px;width:33px;height:1px;background:#808080;"></div>
<div style="left:77px;top:69px;width:1px;height:15px;background:#808080;"></div>
<div style="left:44px;top:84px;width:35px;height:1px;background:#404040;"></div>
<div style="left:78px;top:68px;width:1px;height:17px;background:#404040;"></div>
<span style="left:51px;top:71px;font-size:11px;color:#000;font-weight:normal;font-family:'Liberation Sans';font-size:12px;transform:scaleX(0.9167);transform-origin:0 0;">TS...</span>
<div style="left:79px;top:68px;width:35px;height:17px;background:#D4D0C8;"></div>
<div style="left:79px;top:68px;width:35px;height:1px;background:#FFFFFF;"></div>
<div style="left:79px;top:68px;width:1px;height:17px;background:#FFFFFF;"></div>
<div style="left:80px;top:83px;width:33px;height:1px;background:#808080;"></div>
<div style="left:112px;top:69px;width:1px;height:15px;background:#808080;"></div>
<div style="left:79px;top:84px;width:35px;height:1px;background:#404040;"></div>
<div style="left:113px;top:68px;width:1px;height:17px;background:#404040;"></div>
<span style="left:85px;top:71px;font-size:11px;color:#000;font-weight:normal;font-family:'Liberation Sans';font-size:12px;transform:scaleX(0.9167);transform-origin:0 0;">Su...</span>
<div style="left:114px;top:68px;width:62px;height:17px;background:#D4D0C8;"></div>
<div style="left:114px;top:68px;width:62px;height:1px;background:#FFFFFF;"></div>
<div style="left:114px;top:68px;width:1px;height:17px;background:#FFFFFF;"></div>
<div style="left:115px;top:83px;width:60px;height:1px;background:#808080;"></div>
<div style="left:174px;top:69px;width:1px;height:15px;background:#808080;"></div>
<div style="left:114px;top:84px;width:62px;height:1px;background:#404040;"></div>
<div style="left:175px;top:68px;width:1px;height:17px;background:#404040;"></div>
<span style="left:-129px;width:300px;text-align:right;top:71px;font-size:11px;color:#000;font-size:12px;transform:scaleX(0.8892);transform-origin:100% 0;">Frame#</span>
<div style="left:176px;top:68px;width:111px;height:17px;background:#D4D0C8;"></div>
<div style="left:176px;top:68px;width:111px;height:1px;background:#FFFFFF;"></div>
<div style="left:176px;top:68px;width:1px;height:17px;background:#FFFFFF;"></div>
<div style="left:177px;top:83px;width:109px;height:1px;background:#808080;"></div>
<div style="left:285px;top:69px;width:1px;height:15px;background:#808080;"></div>
<div style="left:176px;top:84px;width:111px;height:1px;background:#404040;"></div>
<div style="left:286px;top:68px;width:1px;height:17px;background:#404040;"></div>
<span style="left:-17px;width:300px;text-align:right;top:71px;font-size:11px;color:#000;font-size:12px;transform:scaleX(0.9039);transform-origin:100% 0;">TIME (Relative)</span>
<div style="left:287px;top:68px;width:60px;height:17px;background:#D4D0C8;"></div>
<div style="left:287px;top:68px;width:60px;height:1px;background:#FFFFFF;"></div>
<div style="left:287px;top:68px;width:1px;height:17px;background:#FFFFFF;"></div>
<div style="left:288px;top:83px;width:58px;height:1px;background:#808080;"></div>
<div style="left:345px;top:69px;width:1px;height:15px;background:#808080;"></div>
<div style="left:287px;top:84px;width:60px;height:1px;background:#404040;"></div>
<div style="left:346px;top:68px;width:1px;height:17px;background:#404040;"></div>
<span style="left:42px;width:300px;text-align:right;top:71px;font-size:11px;color:#000;font-size:12px;transform:scaleX(0.9167);transform-origin:100% 0;">Len</span>
<div style="left:347px;top:68px;width:101px;height:17px;background:#D4D0C8;"></div>
<div style="left:347px;top:68px;width:101px;height:1px;background:#FFFFFF;"></div>
<div style="left:347px;top:68px;width:1px;height:17px;background:#FFFFFF;"></div>
<div style="left:348px;top:83px;width:99px;height:1px;background:#808080;"></div>
<div style="left:446px;top:69px;width:1px;height:15px;background:#808080;"></div>
<div style="left:347px;top:84px;width:101px;height:1px;background:#404040;"></div>
<div style="left:447px;top:68px;width:1px;height:17px;background:#404040;"></div>
<span style="left:354px;top:71px;font-size:11px;color:#000;font-weight:normal;font-family:'Liberation Sans';font-size:12px;transform:scaleX(0.8846);transform-origin:0 0;">PPP Layer3Prot...</span>
<div style="left:448px;top:68px;width:120px;height:17px;background:#D4D0C8;"></div>
<div style="left:448px;top:68px;width:120px;height:1px;background:#FFFFFF;"></div>
<div style="left:448px;top:68px;width:1px;height:17px;background:#FFFFFF;"></div>
<div style="left:449px;top:83px;width:118px;height:1px;background:#808080;"></div>
<div style="left:566px;top:69px;width:1px;height:15px;background:#808080;"></div>
<div style="left:448px;top:84px;width:120px;height:1px;background:#404040;"></div>
<div style="left:567px;top:68px;width:1px;height:17px;background:#404040;"></div>
<span style="left:262px;width:300px;text-align:right;top:71px;font-size:11px;color:#000;font-size:12px;transform:scaleX(0.8855);transform-origin:100% 0;">Source IP Address</span>
<div style="left:568px;top:68px;width:120px;height:17px;background:#D4D0C8;"></div>
<div style="left:568px;top:68px;width:120px;height:1px;background:#FFFFFF;"></div>
<div style="left:568px;top:68px;width:1px;height:17px;background:#FFFFFF;"></div>
<div style="left:569px;top:83px;width:118px;height:1px;background:#808080;"></div>
<div style="left:686px;top:69px;width:1px;height:15px;background:#808080;"></div>
<div style="left:568px;top:84px;width:120px;height:1px;background:#404040;"></div>
<div style="left:687px;top:68px;width:1px;height:17px;background:#404040;"></div>
<span style="left:382px;width:300px;text-align:right;top:71px;font-size:11px;color:#000;font-size:12px;transform:scaleX(0.8828);transform-origin:100% 0;">Destination IP Address</span>
<div style="left:688px;top:68px;width:80px;height:17px;background:#D4D0C8;"></div>
<div style="left:688px;top:68px;width:80px;height:1px;background:#FFFFFF;"></div>
<div style="left:688px;top:68px;width:1px;height:17px;background:#FFFFFF;"></div>
<div style="left:689px;top:83px;width:78px;height:1px;background:#808080;"></div>
<div style="left:766px;top:69px;width:1px;height:15px;background:#808080;"></div>
<div style="left:688px;top:84px;width:80px;height:1px;background:#404040;"></div>
<div style="left:767px;top:68px;width:1px;height:17px;background:#404040;"></div>
<span style="left:694px;top:71px;font-size:11px;color:#000;font-weight:normal;font-family:'Liberation Sans';font-size:12px;transform:scaleX(0.9167);transform-origin:0 0;">Mlppp Seq No</span>
<div style="left:768px;top:68px;width:23px;height:17px;background:#D4D0C8;"></div>
<div style="left:768px;top:68px;width:23px;height:1px;background:#FFFFFF;"></div>
<div style="left:768px;top:68px;width:1px;height:17px;background:#FFFFFF;"></div>
<div style="left:769px;top:83px;width:21px;height:1px;background:#808080;"></div>
<div style="left:789px;top:69px;width:1px;height:15px;background:#808080;"></div>
<div style="left:768px;top:84px;width:23px;height:1px;background:#404040;"></div>
<div style="left:790px;top:68px;width:1px;height:17px;background:#404040;"></div>
<div style="left:27px;top:87px;width:744px;height:118px;background:#EEEEEE;"></div>
<div style="left:27px;top:87px;width:744px;height:16px;background:#0A246A;"></div>
<svg style="position:absolute;left:27px;top:87px" width="744" height="1" viewBox="0 0 744 1" shape-rendering="crispEdges"><rect x="1" y="0" width="1" height="1" fill="#F5DB95"/><rect x="3" y="0" width="1" height="1" fill="#F5DB95"/><rect x="5" y="0" width="1" height="1" fill="#F5DB95"/><rect x="7" y="0" width="1" height="1" fill="#F5DB95"/><rect x="9" y="0" width="1" height="1" fill="#F5DB95"/><rect x="11" y="0" width="1" height="1" fill="#F5DB95"/><rect x="13" y="0" width="1" height="1" fill="#F5DB95"/><rect x="15" y="0" width="1" height="1" fill="#F5DB95"/><rect x="17" y="0" width="1" height="1" fill="#F5DB95"/><rect x="19" y="0" width="1" height="1" fill="#F5DB95"/><rect x="21" y="0" width="1" height="1" fill="#F5DB95"/><rect x="23" y="0" width="1" height="1" fill="#F5DB95"/><rect x="25" y="0" width="1" height="1" fill="#F5DB95"/><rect x="27" y="0" width="1" height="1" fill="#F5DB95"/><rect x="29" y="0" width="1" height="1" fill="#F5DB95"/><rect x="31" y="0" width="1" height="1" fill="#F5DB95"/><rect x="33" y="0" width="1" height="1" fill="#F5DB95"/><rect x="35" y="0" width="1" height="1" fill="#F5DB95"/><rect x="37" y="0" width="1" height="1" fill="#F5DB95"/><rect x="39" y="0" width="1" height="1" fill="#F5DB95"/><rect x="41" y="0" width="1" height="1" fill="#F5DB95"/><rect x="43" y="0" width="1" height="1" fill="#F5DB95"/><rect x="45" y="0" width="1" height="1" fill="#F5DB95"/><rect x="47" y="0" width="1" height="1" fill="#F5DB95"/><rect x="49" y="0" width="1" height="1" fill="#F5DB95"/><rect x="51" y="0" width="1" height="1" fill="#F5DB95"/><rect x="53" y="0" width="1" height="1" fill="#F5DB95"/><rect x="55" y="0" width="1" height="1" fill="#F5DB95"/><rect x="57" y="0" width="1" height="1" fill="#F5DB95"/><rect x="59" y="0" width="1" height="1" fill="#F5DB95"/><rect x="61" y="0" width="1" height="1" fill="#F5DB95"/><rect x="63" y="0" width="1" height="1" fill="#F5DB95"/><rect x="65" y="0" width="1" height="1" fill="#F5DB95"/><rect x="67" y="0" width="1" height="1" fill="#F5DB95"/><rect x="69" y="0" width="1" height="1" fill="#F5DB95"/><rect x="71" y="0" width="1" height="1" fill="#F5DB95"/><rect x="73" y="0" width="1" height="1" fill="#F5DB95"/><rect x="75" y="0" width="1" height="1" fill="#F5DB95"/><rect x="77" y="0" width="1" height="1" fill="#F5DB95"/><rect x="79" y="0" width="1" height="1" fill="#F5DB95"/><rect x="81" y="0" width="1" height="1" fill="#F5DB95"/><rect x="83" y="0" width="1" height="1" fill="#F5DB95"/><rect x="85" y="0" width="1" height="1" fill="#F5DB95"/><rect x="87" y="0" width="1" height="1" fill="#F5DB95"/><rect x="89" y="0" width="1" height="1" fill="#F5DB95"/><rect x="91" y="0" width="1" height="1" fill="#F5DB95"/><rect x="93" y="0" width="1" height="1" fill="#F5DB95"/><rect x="95" y="0" width="1" height="1" fill="#F5DB95"/><rect x="97" y="0" width="1" height="1" fill="#F5DB95"/><rect x="99" y="0" width="1" height="1" fill="#F5DB95"/><rect x="101" y="0" width="1" height="1" fill="#F5DB95"/><rect x="103" y="0" width="1" height="1" fill="#F5DB95"/><rect x="105" y="0" width="1" height="1" fill="#F5DB95"/><rect x="107" y="0" width="1" height="1" fill="#F5DB95"/><rect x="109" y="0" width="1" height="1" fill="#F5DB95"/><rect x="111" y="0" width="1" height="1" fill="#F5DB95"/><rect x="113" y="0" width="1" height="1" fill="#F5DB95"/><rect x="115" y="0" width="1" height="1" fill="#F5DB95"/><rect x="117" y="0" width="1" height="1" fill="#F5DB95"/><rect x="119" y="0" width="1" height="1" fill="#F5DB95"/><rect x="121" y="0" width="1" height="1" fill="#F5DB95"/><rect x="123" y="0" width="1" height="1" fill="#F5DB95"/><rect x="125" y="0" width="1" height="1" fill="#F5DB95"/><rect x="127" y="0" width="1" height="1" fill="#F5DB95"/><rect x="129" y="0" width="1" height="1" fill="#F5DB95"/><rect x="131" y="0" width="1" height="1" fill="#F5DB95"/><rect x="133" y="0" width="1" height="1" fill="#F5DB95"/><rect x="135" y="0" width="1" height="1" fill="#F5DB95"/><rect x="137" y="0" width="1" height="1" fill="#F5DB95"/><rect x="139" y="0" width="1" height="1" fill="#F5DB95"/><rect x="141" y="0" width="1" height="1" fill="#F5DB95"/><rect x="143" y="0" width="1" height="1" fill="#F5DB95"/><rect x="145" y="0" width="1" height="1" fill="#F5DB95"/><rect x="147" y="0" width="1" height="1" fill="#F5DB95"/><rect x="149" y="0" width="1" height="1" fill="#F5DB95"/><rect x="151" y="0" width="1" height="1" fill="#F5DB95"/><rect x="153" y="0" width="1" height="1" fill="#F5DB95"/><rect x="155" y="0" width="1" height="1" fill="#F5DB95"/><rect x="157" y="0" width="1" height="1" fill="#F5DB95"/><rect x="159" y="0" width="1" height="1" fill="#F5DB95"/><rect x="161" y="0" width="1" height="1" fill="#F5DB95"/><rect x="163" y="0" width="1" height="1" fill="#F5DB95"/><rect x="165" y="0" width="1" height="1" fill="#F5DB95"/><rect x="167" y="0" width="1" height="1" fill="#F5DB95"/><rect x="169" y="0" width="1" height="1" fill="#F5DB95"/><rect x="171" y="0" width="1" height="1" fill="#F5DB95"/><rect x="173" y="0" width="1" height="1" fill="#F5DB95"/><rect x="175" y="0" width="1" height="1" fill="#F5DB95"/><rect x="177" y="0" width="1" height="1" fill="#F5DB95"/><rect x="179" y="0" width="1" height="1" fill="#F5DB95"/><rect x="181" y="0" width="1" height="1" fill="#F5DB95"/><rect x="183" y="0" width="1" height="1" fill="#F5DB95"/><rect x="185" y="0" width="1" height="1" fill="#F5DB95"/><rect x="187" y="0" width="1" height="1" fill="#F5DB95"/><rect x="189" y="0" width="1" height="1" fill="#F5DB95"/><rect x="191" y="0" width="1" height="1" fill="#F5DB95"/><rect x="193" y="0" width="1" height="1" fill="#F5DB95"/><rect x="195" y="0" width="1" height="1" fill="#F5DB95"/><rect x="197" y="0" width="1" height="1" fill="#F5DB95"/><rect x="199" y="0" width="1" height="1" fill="#F5DB95"/><rect x="201" y="0" width="1" height="1" fill="#F5DB95"/><rect x="203" y="0" width="1" height="1" fill="#F5DB95"/><rect x="205" y="0" width="1" height="1" fill="#F5DB95"/><rect x="207" y="0" width="1" height="1" fill="#F5DB95"/><rect x="209" y="0" width="1" height="1" fill="#F5DB95"/><rect x="211" y="0" width="1" height="1" fill="#F5DB95"/><rect x="213" y="0" width="1" height="1" fill="#F5DB95"/><rect x="215" y="0" width="1" height="1" fill="#F5DB95"/><rect x="217" y="0" width="1" height="1" fill="#F5DB95"/><rect x="219" y="0" width="1" height="1" fill="#F5DB95"/><rect x="221" y="0" width="1" height="1" fill="#F5DB95"/><rect x="223" y="0" width="1" height="1" fill="#F5DB95"/><rect x="225" y="0" width="1" height="1" fill="#F5DB95"/><rect x="227" y="0" width="1" height="1" fill="#F5DB95"/><rect x="229" y="0" width="1" height="1" fill="#F5DB95"/><rect x="231" y="0" width="1" height="1" fill="#F5DB95"/><rect x="233" y="0" width="1" height="1" fill="#F5DB95"/><rect x="235" y="0" width="1" height="1" fill="#F5DB95"/><rect x="237" y="0" width="1" height="1" fill="#F5DB95"/><rect x="239" y="0" width="1" height="1" fill="#F5DB95"/><rect x="241" y="0" width="1" height="1" fill="#F5DB95"/><rect x="243" y="0" width="1" height="1" fill="#F5DB95"/><rect x="245" y="0" width="1" height="1" fill="#F5DB95"/><rect x="247" y="0" width="1" height="1" fill="#F5DB95"/><rect x="249" y="0" width="1" height="1" fill="#F5DB95"/><rect x="251" y="0" width="1" height="1" fill="#F5DB95"/><rect x="253" y="0" width="1" height="1" fill="#F5DB95"/><rect x="255" y="0" width="1" height="1" fill="#F5DB95"/><rect x="257" y="0" width="1" height="1" fill="#F5DB95"/><rect x="259" y="0" width="1" height="1" fill="#F5DB95"/><rect x="261" y="0" width="1" height="1" fill="#F5DB95"/><rect x="263" y="0" width="1" height="1" fill="#F5DB95"/><rect x="265" y="0" width="1" height="1" fill="#F5DB95"/><rect x="267" y="0" width="1" height="1" fill="#F5DB95"/><rect x="269" y="0" width="1" height="1" fill="#F5DB95"/><rect x="271" y="0" width="1" height="1" fill="#F5DB95"/><rect x="273" y="0" width="1" height="1" fill="#F5DB95"/><rect x="275" y="0" width="1" height="1" fill="#F5DB95"/><rect x="277" y="0" width="1" height="1" fill="#F5DB95"/><rect x="279" y="0" width="1" height="1" fill="#F5DB95"/><rect x="281" y="0" width="1" height="1" fill="#F5DB95"/><rect x="283" y="0" width="1" height="1" fill="#F5DB95"/><rect x="285" y="0" width="1" height="1" fill="#F5DB95"/><rect x="287" y="0" width="1" height="1" fill="#F5DB95"/><rect x="289" y="0" width="1" height="1" fill="#F5DB95"/><rect x="291" y="0" width="1" height="1" fill="#F5DB95"/><rect x="293" y="0" width="1" height="1" fill="#F5DB95"/><rect x="295" y="0" width="1" height="1" fill="#F5DB95"/><rect x="297" y="0" width="1" height="1" fill="#F5DB95"/><rect x="299" y="0" width="1" height="1" fill="#F5DB95"/><rect x="301" y="0" width="1" height="1" fill="#F5DB95"/><rect x="303" y="0" width="1" height="1" fill="#F5DB95"/><rect x="305" y="0" width="1" height="1" fill="#F5DB95"/><rect x="307" y="0" width="1" height="1" fill="#F5DB95"/><rect x="309" y="0" width="1" height="1" fill="#F5DB95"/><rect x="311" y="0" width="1" height="1" fill="#F5DB95"/><rect x="313" y="0" width="1" height="1" fill="#F5DB95"/><rect x="315" y="0" width="1" height="1" fill="#F5DB95"/><rect x="317" y="0" width="1" height="1" fill="#F5DB95"/><rect x="319" y="0" width="1" height="1" fill="#F5DB95"/><rect x="321" y="0" width="1" height="1" fill="#F5DB95"/><rect x="323" y="0" width="1" height="1" fill="#F5DB95"/><rect x="325" y="0" width="1" height="1" fill="#F5DB95"/><rect x="327" y="0" width="1" height="1" fill="#F5DB95"/><rect x="329" y="0" width="1" height="1" fill="#F5DB95"/><rect x="331" y="0" width="1" height="1" fill="#F5DB95"/><rect x="333" y="0" width="1" height="1" fill="#F5DB95"/><rect x="335" y="0" width="1" height="1" fill="#F5DB95"/><rect x="337" y="0" width="1" height="1" fill="#F5DB95"/><rect x="339" y="0" width="1" height="1" fill="#F5DB95"/><rect x="341" y="0" width="1" height="1" fill="#F5DB95"/><rect x="343" y="0" width="1" height="1" fill="#F5DB95"/><rect x="345" y="0" width="1" height="1" fill="#F5DB95"/><rect x="347" y="0" width="1" height="1" fill="#F5DB95"/><rect x="349" y="0" width="1" height="1" fill="#F5DB95"/><rect x="351" y="0" width="1" height="1" fill="#F5DB95"/><rect x="353" y="0" width="1" height="1" fill="#F5DB95"/><rect x="355" y="0" width="1" height="1" fill="#F5DB95"/><rect x="357" y="0" width="1" height="1" fill="#F5DB95"/><rect x="359" y="0" width="1" height="1" fill="#F5DB95"/><rect x="361" y="0" width="1" height="1" fill="#F5DB95"/><rect x="363" y="0" width="1" height="1" fill="#F5DB95"/><rect x="365" y="0" width="1" height="1" fill="#F5DB95"/><rect x="367" y="0" width="1" height="1" fill="#F5DB95"/><rect x="369" y="0" width="1" height="1" fill="#F5DB95"/><rect x="371" y="0" width="1" height="1" fill="#F5DB95"/><rect x="373" y="0" width="1" height="1" fill="#F5DB95"/><rect x="375" y="0" width="1" height="1" fill="#F5DB95"/><rect x="377" y="0" width="1" height="1" fill="#F5DB95"/><rect x="379" y="0" width="1" height="1" fill="#F5DB95"/><rect x="381" y="0" width="1" height="1" fill="#F5DB95"/><rect x="383" y="0" width="1" height="1" fill="#F5DB95"/><rect x="385" y="0" width="1" height="1" fill="#F5DB95"/><rect x="387" y="0" width="1" height="1" fill="#F5DB95"/><rect x="389" y="0" width="1" height="1" fill="#F5DB95"/><rect x="391" y="0" width="1" height="1" fill="#F5DB95"/><rect x="393" y="0" width="1" height="1" fill="#F5DB95"/><rect x="395" y="0" width="1" height="1" fill="#F5DB95"/><rect x="397" y="0" width="1" height="1" fill="#F5DB95"/><rect x="399" y="0" width="1" height="1" fill="#F5DB95"/><rect x="401" y="0" width="1" height="1" fill="#F5DB95"/><rect x="403" y="0" width="1" height="1" fill="#F5DB95"/><rect x="405" y="0" width="1" height="1" fill="#F5DB95"/><rect x="407" y="0" width="1" height="1" fill="#F5DB95"/><rect x="409" y="0" width="1" height="1" fill="#F5DB95"/><rect x="411" y="0" width="1" height="1" fill="#F5DB95"/><rect x="413" y="0" width="1" height="1" fill="#F5DB95"/><rect x="415" y="0" width="1" height="1" fill="#F5DB95"/><rect x="417" y="0" width="1" height="1" fill="#F5DB95"/><rect x="419" y="0" width="1" height="1" fill="#F5DB95"/><rect x="421" y="0" width="1" height="1" fill="#F5DB95"/><rect x="423" y="0" width="1" height="1" fill="#F5DB95"/><rect x="425" y="0" width="1" height="1" fill="#F5DB95"/><rect x="427" y="0" width="1" height="1" fill="#F5DB95"/><rect x="429" y="0" width="1" height="1" fill="#F5DB95"/><rect x="431" y="0" width="1" height="1" fill="#F5DB95"/><rect x="433" y="0" width="1" height="1" fill="#F5DB95"/><rect x="435" y="0" width="1" height="1" fill="#F5DB95"/><rect x="437" y="0" width="1" height="1" fill="#F5DB95"/><rect x="439" y="0" width="1" height="1" fill="#F5DB95"/><rect x="441" y="0" width="1" height="1" fill="#F5DB95"/><rect x="443" y="0" width="1" height="1" fill="#F5DB95"/><rect x="445" y="0" width="1" height="1" fill="#F5DB95"/><rect x="447" y="0" width="1" height="1" fill="#F5DB95"/><rect x="449" y="0" width="1" height="1" fill="#F5DB95"/><rect x="451" y="0" width="1" height="1" fill="#F5DB95"/><rect x="453" y="0" width="1" height="1" fill="#F5DB95"/><rect x="455" y="0" width="1" height="1" fill="#F5DB95"/><rect x="457" y="0" width="1" height="1" fill="#F5DB95"/><rect x="459" y="0" width="1" height="1" fill="#F5DB95"/><rect x="461" y="0" width="1" height="1" fill="#F5DB95"/><rect x="463" y="0" width="1" height="1" fill="#F5DB95"/><rect x="465" y="0" width="1" height="1" fill="#F5DB95"/><rect x="467" y="0" width="1" height="1" fill="#F5DB95"/><rect x="469" y="0" width="1" height="1" fill="#F5DB95"/><rect x="471" y="0" width="1" height="1" fill="#F5DB95"/><rect x="473" y="0" width="1" height="1" fill="#F5DB95"/><rect x="475" y="0" width="1" height="1" fill="#F5DB95"/><rect x="477" y="0" width="1" height="1" fill="#F5DB95"/><rect x="479" y="0" width="1" height="1" fill="#F5DB95"/><rect x="481" y="0" width="1" height="1" fill="#F5DB95"/><rect x="483" y="0" width="1" height="1" fill="#F5DB95"/><rect x="485" y="0" width="1" height="1" fill="#F5DB95"/><rect x="487" y="0" width="1" height="1" fill="#F5DB95"/><rect x="489" y="0" width="1" height="1" fill="#F5DB95"/><rect x="491" y="0" width="1" height="1" fill="#F5DB95"/><rect x="493" y="0" width="1" height="1" fill="#F5DB95"/><rect x="495" y="0" width="1" height="1" fill="#F5DB95"/><rect x="497" y="0" width="1" height="1" fill="#F5DB95"/><rect x="499" y="0" width="1" height="1" fill="#F5DB95"/><rect x="501" y="0" width="1" height="1" fill="#F5DB95"/><rect x="503" y="0" width="1" height="1" fill="#F5DB95"/><rect x="505" y="0" width="1" height="1" fill="#F5DB95"/><rect x="507" y="0" width="1" height="1" fill="#F5DB95"/><rect x="509" y="0" width="1" height="1" fill="#F5DB95"/><rect x="511" y="0" width="1" height="1" fill="#F5DB95"/><rect x="513" y="0" width="1" height="1" fill="#F5DB95"/><rect x="515" y="0" width="1" height="1" fill="#F5DB95"/><rect x="517" y="0" width="1" height="1" fill="#F5DB95"/><rect x="519" y="0" width="1" height="1" fill="#F5DB95"/><rect x="521" y="0" width="1" height="1" fill="#F5DB95"/><rect x="523" y="0" width="1" height="1" fill="#F5DB95"/><rect x="525" y="0" width="1" height="1" fill="#F5DB95"/><rect x="527" y="0" width="1" height="1" fill="#F5DB95"/><rect x="529" y="0" width="1" height="1" fill="#F5DB95"/><rect x="531" y="0" width="1" height="1" fill="#F5DB95"/><rect x="533" y="0" width="1" height="1" fill="#F5DB95"/><rect x="535" y="0" width="1" height="1" fill="#F5DB95"/><rect x="537" y="0" width="1" height="1" fill="#F5DB95"/><rect x="539" y="0" width="1" height="1" fill="#F5DB95"/><rect x="541" y="0" width="1" height="1" fill="#F5DB95"/><rect x="543" y="0" width="1" height="1" fill="#F5DB95"/><rect x="545" y="0" width="1" height="1" fill="#F5DB95"/><rect x="547" y="0" width="1" height="1" fill="#F5DB95"/><rect x="549" y="0" width="1" height="1" fill="#F5DB95"/><rect x="551" y="0" width="1" height="1" fill="#F5DB95"/><rect x="553" y="0" width="1" height="1" fill="#F5DB95"/><rect x="555" y="0" width="1" height="1" fill="#F5DB95"/><rect x="557" y="0" width="1" height="1" fill="#F5DB95"/><rect x="559" y="0" width="1" height="1" fill="#F5DB95"/><rect x="561" y="0" width="1" height="1" fill="#F5DB95"/><rect x="563" y="0" width="1" height="1" fill="#F5DB95"/><rect x="565" y="0" width="1" height="1" fill="#F5DB95"/><rect x="567" y="0" width="1" height="1" fill="#F5DB95"/><rect x="569" y="0" width="1" height="1" fill="#F5DB95"/><rect x="571" y="0" width="1" height="1" fill="#F5DB95"/><rect x="573" y="0" width="1" height="1" fill="#F5DB95"/><rect x="575" y="0" width="1" height="1" fill="#F5DB95"/><rect x="577" y="0" width="1" height="1" fill="#F5DB95"/><rect x="579" y="0" width="1" height="1" fill="#F5DB95"/><rect x="581" y="0" width="1" height="1" fill="#F5DB95"/><rect x="583" y="0" width="1" height="1" fill="#F5DB95"/><rect x="585" y="0" width="1" height="1" fill="#F5DB95"/><rect x="587" y="0" width="1" height="1" fill="#F5DB95"/><rect x="589" y="0" width="1" height="1" fill="#F5DB95"/><rect x="591" y="0" width="1" height="1" fill="#F5DB95"/><rect x="593" y="0" width="1" height="1" fill="#F5DB95"/><rect x="595" y="0" width="1" height="1" fill="#F5DB95"/><rect x="597" y="0" width="1" height="1" fill="#F5DB95"/><rect x="599" y="0" width="1" height="1" fill="#F5DB95"/><rect x="601" y="0" width="1" height="1" fill="#F5DB95"/><rect x="603" y="0" width="1" height="1" fill="#F5DB95"/><rect x="605" y="0" width="1" height="1" fill="#F5DB95"/><rect x="607" y="0" width="1" height="1" fill="#F5DB95"/><rect x="609" y="0" width="1" height="1" fill="#F5DB95"/><rect x="611" y="0" width="1" height="1" fill="#F5DB95"/><rect x="613" y="0" width="1" height="1" fill="#F5DB95"/><rect x="615" y="0" width="1" height="1" fill="#F5DB95"/><rect x="617" y="0" width="1" height="1" fill="#F5DB95"/><rect x="619" y="0" width="1" height="1" fill="#F5DB95"/><rect x="621" y="0" width="1" height="1" fill="#F5DB95"/><rect x="623" y="0" width="1" height="1" fill="#F5DB95"/><rect x="625" y="0" width="1" height="1" fill="#F5DB95"/><rect x="627" y="0" width="1" height="1" fill="#F5DB95"/><rect x="629" y="0" width="1" height="1" fill="#F5DB95"/><rect x="631" y="0" width="1" height="1" fill="#F5DB95"/><rect x="633" y="0" width="1" height="1" fill="#F5DB95"/><rect x="635" y="0" width="1" height="1" fill="#F5DB95"/><rect x="637" y="0" width="1" height="1" fill="#F5DB95"/><rect x="639" y="0" width="1" height="1" fill="#F5DB95"/><rect x="641" y="0" width="1" height="1" fill="#F5DB95"/><rect x="643" y="0" width="1" height="1" fill="#F5DB95"/><rect x="645" y="0" width="1" height="1" fill="#F5DB95"/><rect x="647" y="0" width="1" height="1" fill="#F5DB95"/><rect x="649" y="0" width="1" height="1" fill="#F5DB95"/><rect x="651" y="0" width="1" height="1" fill="#F5DB95"/><rect x="653" y="0" width="1" height="1" fill="#F5DB95"/><rect x="655" y="0" width="1" height="1" fill="#F5DB95"/><rect x="657" y="0" width="1" height="1" fill="#F5DB95"/><rect x="659" y="0" width="1" height="1" fill="#F5DB95"/><rect x="661" y="0" width="1" height="1" fill="#F5DB95"/><rect x="663" y="0" width="1" height="1" fill="#F5DB95"/><rect x="665" y="0" width="1" height="1" fill="#F5DB95"/><rect x="667" y="0" width="1" height="1" fill="#F5DB95"/><rect x="669" y="0" width="1" height="1" fill="#F5DB95"/><rect x="671" y="0" width="1" height="1" fill="#F5DB95"/><rect x="673" y="0" width="1" height="1" fill="#F5DB95"/><rect x="675" y="0" width="1" height="1" fill="#F5DB95"/><rect x="677" y="0" width="1" height="1" fill="#F5DB95"/><rect x="679" y="0" width="1" height="1" fill="#F5DB95"/><rect x="681" y="0" width="1" height="1" fill="#F5DB95"/><rect x="683" y="0" width="1" height="1" fill="#F5DB95"/><rect x="685" y="0" width="1" height="1" fill="#F5DB95"/><rect x="687" y="0" width="1" height="1" fill="#F5DB95"/><rect x="689" y="0" width="1" height="1" fill="#F5DB95"/><rect x="691" y="0" width="1" height="1" fill="#F5DB95"/><rect x="693" y="0" width="1" height="1" fill="#F5DB95"/><rect x="695" y="0" width="1" height="1" fill="#F5DB95"/><rect x="697" y="0" width="1" height="1" fill="#F5DB95"/><rect x="699" y="0" width="1" height="1" fill="#F5DB95"/><rect x="701" y="0" width="1" height="1" fill="#F5DB95"/><rect x="703" y="0" width="1" height="1" fill="#F5DB95"/><rect x="705" y="0" width="1" height="1" fill="#F5DB95"/><rect x="707" y="0" width="1" height="1" fill="#F5DB95"/><rect x="709" y="0" width="1" height="1" fill="#F5DB95"/><rect x="711" y="0" width="1" height="1" fill="#F5DB95"/><rect x="713" y="0" width="1" height="1" fill="#F5DB95"/><rect x="715" y="0" width="1" height="1" fill="#F5DB95"/><rect x="717" y="0" width="1" height="1" fill="#F5DB95"/><rect x="719" y="0" width="1" height="1" fill="#F5DB95"/><rect x="721" y="0" width="1" height="1" fill="#F5DB95"/><rect x="723" y="0" width="1" height="1" fill="#F5DB95"/><rect x="725" y="0" width="1" height="1" fill="#F5DB95"/><rect x="727" y="0" width="1" height="1" fill="#F5DB95"/><rect x="729" y="0" width="1" height="1" fill="#F5DB95"/><rect x="731" y="0" width="1" height="1" fill="#F5DB95"/><rect x="733" y="0" width="1" height="1" fill="#F5DB95"/><rect x="735" y="0" width="1" height="1" fill="#F5DB95"/><rect x="737" y="0" width="1" height="1" fill="#F5DB95"/><rect x="739" y="0" width="1" height="1" fill="#F5DB95"/><rect x="741" y="0" width="1" height="1" fill="#F5DB95"/><rect x="743" y="0" width="1" height="1" fill="#F5DB95"/></svg>
<svg style="position:absolute;left:27px;top:87px" width="1" height="16" viewBox="0 0 1 16" shape-rendering="crispEdges"><rect x="0" y="1" width="1" height="1" fill="#F5DB95"/><rect x="0" y="3" width="1" height="1" fill="#F5DB95"/><rect x="0" y="5" width="1" height="1" fill="#F5DB95"/><rect x="0" y="7" width="1" height="1" fill="#F5DB95"/><rect x="0" y="9" width="1" height="1" fill="#F5DB95"/><rect x="0" y="11" width="1" height="1" fill="#F5DB95"/><rect x="0" y="13" width="1" height="1" fill="#F5DB95"/><rect x="0" y="15" width="1" height="1" fill="#F5DB95"/></svg>
<div style="left:9px;top:103px;width:762px;height:1px;background:#D4D0C8;"></div>
<div style="left:9px;top:120px;width:762px;height:1px;background:#D4D0C8;"></div>
<div style="left:9px;top:137px;width:762px;height:1px;background:#D4D0C8;"></div>
<div style="left:9px;top:154px;width:762px;height:1px;background:#D4D0C8;"></div>
<div style="left:9px;top:171px;width:762px;height:1px;background:#D4D0C8;"></div>
<div style="left:9px;top:188px;width:762px;height:1px;background:#D4D0C8;"></div>
<div style="left:44px;top:85px;width:1px;height:120px;background:#D4D0C8;"></div>
<div style="left:79px;top:85px;width:1px;height:120px;background:#D4D0C8;"></div>
<div style="left:114px;top:85px;width:1px;height:120px;background:#D4D0C8;"></div>
<div style="left:176px;top:85px;width:1px;height:120px;background:#D4D0C8;"></div>
<div style="left:287px;top:85px;width:1px;height:120px;background:#D4D0C8;"></div>
<div style="left:347px;top:85px;width:1px;height:120px;background:#D4D0C8;"></div>
<div style="left:448px;top:85px;width:1px;height:120px;background:#D4D0C8;"></div>
<div style="left:568px;top:85px;width:1px;height:120px;background:#D4D0C8;"></div>
<div style="left:688px;top:85px;width:1px;height:120px;background:#D4D0C8;"></div>
<div style="left:768px;top:85px;width:1px;height:120px;background:#D4D0C8;"></div>
<svg style="position:absolute;left:14px;top:87px" width="13" height="16" viewBox="0 0 13 16" shape-rendering="crispEdges"><rect x="0" y="10" width="1" height="1" fill="#0A7A3A"/><rect x="1" y="11" width="1" height="1" fill="#0A7A3A"/><rect x="2" y="12" width="1" height="1" fill="#0A7A3A"/><rect x="3" y="13" width="1" height="1" fill="#0A7A3A"/><rect x="4" y="14" width="1" height="1" fill="#0A7A3A"/><rect x="5" y="15" width="1" height="1" fill="#0A7A3A"/><rect x="6" y="14" width="1" height="1" fill="#0A7A3A"/><rect x="6" y="13" width="1" height="1" fill="#0A7A3A"/><rect x="7" y="12" width="1" height="1" fill="#0A7A3A"/><rect x="7" y="11" width="1" height="1" fill="#0A7A3A"/><rect x="8" y="10" width="1" height="1" fill="#0A7A3A"/><rect x="8" y="9" width="1" height="1" fill="#0A7A3A"/><rect x="9" y="8" width="1" height="1" fill="#0A7A3A"/><rect x="10" y="7" width="1" height="1" fill="#0A7A3A"/><rect x="10" y="6" width="1" height="1" fill="#0A7A3A"/><rect x="11" y="5" width="1" height="1" fill="#0A7A3A"/><rect x="11" y="4" width="1" height="1" fill="#0A7A3A"/><rect x="12" y="3" width="1" height="1" fill="#0A7A3A"/></svg>
<span style="left:32px;top:90px;font-size:11px;color:#FFF;font-weight:normal;font-family:'Liberation Sans';font-size:12px;transform:scaleX(0.9167);transform-origin:0 0;">2</span>
<span style="left:52px;top:90px;font-size:11px;color:#FFF;font-weight:normal;font-family:'Liberation Sans';font-size:12px;transform:scaleX(0.9167);transform-origin:0 0;">0-23</span>
<span style="left:-130px;width:300px;text-align:right;top:90px;font-size:11px;color:#FFF;font-size:12px;transform:scaleX(0.9167);transform-origin:100% 0;">0</span>
<span style="left:-17px;width:300px;text-align:right;top:90px;font-size:11px;color:#FFF;font-size:12px;transform:scaleX(0.9167);transform-origin:100% 0;">00:00:00.000000</span>
<span style="left:42px;width:300px;text-align:right;top:90px;font-size:11px;color:#FFF;font-size:12px;transform:scaleX(0.9167);transform-origin:100% 0;">1442</span>
<span style="left:143px;width:300px;text-align:right;top:90px;font-size:11px;color:#FFF;font-size:12px;transform:scaleX(0.9167);transform-origin:100% 0;">Bridging PDU</span>
<span style="left:262px;width:300px;text-align:right;top:90px;font-size:11px;color:#FFF;font-size:12px;transform:scaleX(0.9167);transform-origin:100% 0;">65.247.101.71</span>
<span style="left:383px;width:300px;text-align:right;top:90px;font-size:11px;color:#FFF;font-size:12px;transform:scaleX(0.9167);transform-origin:100% 0;">66.149.111.146</span>
<svg style="position:absolute;left:14px;top:104px" width="13" height="16" viewBox="0 0 13 16" shape-rendering="crispEdges"><rect x="0" y="10" width="1" height="1" fill="#00FF00"/><rect x="1" y="11" width="1" height="1" fill="#00FF00"/><rect x="2" y="12" width="1" height="1" fill="#00FF00"/><rect x="3" y="13" width="1" height="1" fill="#00FF00"/><rect x="4" y="14" width="1" height="1" fill="#00FF00"/><rect x="5" y="15" width="1" height="1" fill="#00FF00"/><rect x="6" y="14" width="1" height="1" fill="#00FF00"/><rect x="6" y="13" width="1" height="1" fill="#00FF00"/><rect x="7" y="12" width="1" height="1" fill="#00FF00"/><rect x="7" y="11" width="1" height="1" fill="#00FF00"/><rect x="8" y="10" width="1" height="1" fill="#00FF00"/><rect x="8" y="9" width="1" height="1" fill="#00FF00"/><rect x="9" y="8" width="1" height="1" fill="#00FF00"/><rect x="10" y="7" width="1" height="1" fill="#00FF00"/><rect x="10" y="6" width="1" height="1" fill="#00FF00"/><rect x="11" y="5" width="1" height="1" fill="#00FF00"/><rect x="11" y="4" width="1" height="1" fill="#00FF00"/><rect x="12" y="3" width="1" height="1" fill="#00FF00"/></svg>
<span style="left:32px;top:107px;font-size:11px;color:#000;font-weight:normal;font-family:'Liberation Sans';font-size:12px;transform:scaleX(0.9167);transform-origin:0 0;">2</span>
<span style="left:52px;top:107px;font-size:11px;color:#000;font-weight:normal;font-family:'Liberation Sans';font-size:12px;transform:scaleX(0.9167);transform-origin:0 0;">0-23</span>
<span style="left:-130px;width:300px;text-align:right;top:107px;font-size:11px;color:#000;font-size:12px;transform:scaleX(0.9167);transform-origin:100% 0;">1</span>
<span style="left:-17px;width:300px;text-align:right;top:107px;font-size:11px;color:#000;font-size:12px;transform:scaleX(0.9167);transform-origin:100% 0;">00:00:00.016885</span>
<span style="left:42px;width:300px;text-align:right;top:107px;font-size:11px;color:#000;font-size:12px;transform:scaleX(0.9167);transform-origin:100% 0;">1442</span>
<span style="left:143px;width:300px;text-align:right;top:107px;font-size:11px;color:#000;font-size:12px;transform:scaleX(0.9167);transform-origin:100% 0;">Bridging PDU</span>
<span style="left:262px;width:300px;text-align:right;top:107px;font-size:11px;color:#000;font-size:12px;transform:scaleX(0.9167);transform-origin:100% 0;">65.247.101.71</span>
<span style="left:383px;width:300px;text-align:right;top:107px;font-size:11px;color:#000;font-size:12px;transform:scaleX(0.9167);transform-origin:100% 0;">66.149.111.146</span>
<svg style="position:absolute;left:14px;top:121px" width="13" height="16" viewBox="0 0 13 16" shape-rendering="crispEdges"><rect x="0" y="10" width="1" height="1" fill="#00FF00"/><rect x="1" y="11" width="1" height="1" fill="#00FF00"/><rect x="2" y="12" width="1" height="1" fill="#00FF00"/><rect x="3" y="13" width="1" height="1" fill="#00FF00"/><rect x="4" y="14" width="1" height="1" fill="#00FF00"/><rect x="5" y="15" width="1" height="1" fill="#00FF00"/><rect x="6" y="14" width="1" height="1" fill="#00FF00"/><rect x="6" y="13" width="1" height="1" fill="#00FF00"/><rect x="7" y="12" width="1" height="1" fill="#00FF00"/><rect x="7" y="11" width="1" height="1" fill="#00FF00"/><rect x="8" y="10" width="1" height="1" fill="#00FF00"/><rect x="8" y="9" width="1" height="1" fill="#00FF00"/><rect x="9" y="8" width="1" height="1" fill="#00FF00"/><rect x="10" y="7" width="1" height="1" fill="#00FF00"/><rect x="10" y="6" width="1" height="1" fill="#00FF00"/><rect x="11" y="5" width="1" height="1" fill="#00FF00"/><rect x="11" y="4" width="1" height="1" fill="#00FF00"/><rect x="12" y="3" width="1" height="1" fill="#00FF00"/></svg>
<span style="left:32px;top:124px;font-size:11px;color:#000;font-weight:normal;font-family:'Liberation Sans';font-size:12px;transform:scaleX(0.9167);transform-origin:0 0;">2</span>
<span style="left:52px;top:124px;font-size:11px;color:#000;font-weight:normal;font-family:'Liberation Sans';font-size:12px;transform:scaleX(0.9167);transform-origin:0 0;">0-23</span>
<span style="left:-130px;width:300px;text-align:right;top:124px;font-size:11px;color:#000;font-size:12px;transform:scaleX(0.9167);transform-origin:100% 0;">2</span>
<span style="left:-17px;width:300px;text-align:right;top:124px;font-size:11px;color:#000;font-size:12px;transform:scaleX(0.9167);transform-origin:100% 0;">00:00:00.033718</span>
<span style="left:42px;width:300px;text-align:right;top:124px;font-size:11px;color:#000;font-size:12px;transform:scaleX(0.9167);transform-origin:100% 0;">1442</span>
<span style="left:143px;width:300px;text-align:right;top:124px;font-size:11px;color:#000;font-size:12px;transform:scaleX(0.9167);transform-origin:100% 0;">Bridging PDU</span>
<span style="left:262px;width:300px;text-align:right;top:124px;font-size:11px;color:#000;font-size:12px;transform:scaleX(0.9167);transform-origin:100% 0;">65.247.101.71</span>
<span style="left:383px;width:300px;text-align:right;top:124px;font-size:11px;color:#000;font-size:12px;transform:scaleX(0.9167);transform-origin:100% 0;">66.149.111.146</span>
<svg style="position:absolute;left:14px;top:138px" width="13" height="16" viewBox="0 0 13 16" shape-rendering="crispEdges"><rect x="0" y="10" width="1" height="1" fill="#00FF00"/><rect x="1" y="11" width="1" height="1" fill="#00FF00"/><rect x="2" y="12" width="1" height="1" fill="#00FF00"/><rect x="3" y="13" width="1" height="1" fill="#00FF00"/><rect x="4" y="14" width="1" height="1" fill="#00FF00"/><rect x="5" y="15" width="1" height="1" fill="#00FF00"/><rect x="6" y="14" width="1" height="1" fill="#00FF00"/><rect x="6" y="13" width="1" height="1" fill="#00FF00"/><rect x="7" y="12" width="1" height="1" fill="#00FF00"/><rect x="7" y="11" width="1" height="1" fill="#00FF00"/><rect x="8" y="10" width="1" height="1" fill="#00FF00"/><rect x="8" y="9" width="1" height="1" fill="#00FF00"/><rect x="9" y="8" width="1" height="1" fill="#00FF00"/><rect x="10" y="7" width="1" height="1" fill="#00FF00"/><rect x="10" y="6" width="1" height="1" fill="#00FF00"/><rect x="11" y="5" width="1" height="1" fill="#00FF00"/><rect x="11" y="4" width="1" height="1" fill="#00FF00"/><rect x="12" y="3" width="1" height="1" fill="#00FF00"/></svg>
<span style="left:32px;top:141px;font-size:11px;color:#000;font-weight:normal;font-family:'Liberation Sans';font-size:12px;transform:scaleX(0.9167);transform-origin:0 0;">2</span>
<span style="left:52px;top:141px;font-size:11px;color:#000;font-weight:normal;font-family:'Liberation Sans';font-size:12px;transform:scaleX(0.9167);transform-origin:0 0;">0-23</span>
<span style="left:-130px;width:300px;text-align:right;top:141px;font-size:11px;color:#000;font-size:12px;transform:scaleX(0.9167);transform-origin:100% 0;">3</span>
<span style="left:-17px;width:300px;text-align:right;top:141px;font-size:11px;color:#000;font-size:12px;transform:scaleX(0.9167);transform-origin:100% 0;">00:00:00.050625</span>
<span style="left:42px;width:300px;text-align:right;top:141px;font-size:11px;color:#000;font-size:12px;transform:scaleX(0.9167);transform-origin:100% 0;">1442</span>
<span style="left:143px;width:300px;text-align:right;top:141px;font-size:11px;color:#000;font-size:12px;transform:scaleX(0.9167);transform-origin:100% 0;">Bridging PDU</span>
<span style="left:262px;width:300px;text-align:right;top:141px;font-size:11px;color:#000;font-size:12px;transform:scaleX(0.9167);transform-origin:100% 0;">65.247.101.71</span>
<span style="left:383px;width:300px;text-align:right;top:141px;font-size:11px;color:#000;font-size:12px;transform:scaleX(0.9167);transform-origin:100% 0;">66.149.111.146</span>
<svg style="position:absolute;left:14px;top:155px" width="13" height="16" viewBox="0 0 13 16" shape-rendering="crispEdges"><rect x="0" y="10" width="1" height="1" fill="#00FF00"/><rect x="1" y="11" width="1" height="1" fill="#00FF00"/><rect x="2" y="12" width="1" height="1" fill="#00FF00"/><rect x="3" y="13" width="1" height="1" fill="#00FF00"/><rect x="4" y="14" width="1" height="1" fill="#00FF00"/><rect x="5" y="15" width="1" height="1" fill="#00FF00"/><rect x="6" y="14" width="1" height="1" fill="#00FF00"/><rect x="6" y="13" width="1" height="1" fill="#00FF00"/><rect x="7" y="12" width="1" height="1" fill="#00FF00"/><rect x="7" y="11" width="1" height="1" fill="#00FF00"/><rect x="8" y="10" width="1" height="1" fill="#00FF00"/><rect x="8" y="9" width="1" height="1" fill="#00FF00"/><rect x="9" y="8" width="1" height="1" fill="#00FF00"/><rect x="10" y="7" width="1" height="1" fill="#00FF00"/><rect x="10" y="6" width="1" height="1" fill="#00FF00"/><rect x="11" y="5" width="1" height="1" fill="#00FF00"/><rect x="11" y="4" width="1" height="1" fill="#00FF00"/><rect x="12" y="3" width="1" height="1" fill="#00FF00"/></svg>
<span style="left:32px;top:158px;font-size:11px;color:#000;font-weight:normal;font-family:'Liberation Sans';font-size:12px;transform:scaleX(0.9167);transform-origin:0 0;">2</span>
<span style="left:52px;top:158px;font-size:11px;color:#000;font-weight:normal;font-family:'Liberation Sans';font-size:12px;transform:scaleX(0.9167);transform-origin:0 0;">0-23</span>
<span style="left:-130px;width:300px;text-align:right;top:158px;font-size:11px;color:#000;font-size:12px;transform:scaleX(0.9167);transform-origin:100% 0;">4</span>
<span style="left:-17px;width:300px;text-align:right;top:158px;font-size:11px;color:#000;font-size:12px;transform:scaleX(0.9167);transform-origin:100% 0;">00:00:00.071244</span>
<span style="left:42px;width:300px;text-align:right;top:158px;font-size:11px;color:#000;font-size:12px;transform:scaleX(0.9167);transform-origin:100% 0;">1442</span>
<span style="left:143px;width:300px;text-align:right;top:158px;font-size:11px;color:#000;font-size:12px;transform:scaleX(0.9167);transform-origin:100% 0;">Bridging PDU</span>
<span style="left:262px;width:300px;text-align:right;top:158px;font-size:11px;color:#000;font-size:12px;transform:scaleX(0.9167);transform-origin:100% 0;">65.247.101.71</span>
<span style="left:383px;width:300px;text-align:right;top:158px;font-size:11px;color:#000;font-size:12px;transform:scaleX(0.9167);transform-origin:100% 0;">66.149.111.146</span>
<svg style="position:absolute;left:14px;top:172px" width="13" height="16" viewBox="0 0 13 16" shape-rendering="crispEdges"><rect x="0" y="10" width="1" height="1" fill="#00FF00"/><rect x="1" y="11" width="1" height="1" fill="#00FF00"/><rect x="2" y="12" width="1" height="1" fill="#00FF00"/><rect x="3" y="13" width="1" height="1" fill="#00FF00"/><rect x="4" y="14" width="1" height="1" fill="#00FF00"/><rect x="5" y="15" width="1" height="1" fill="#00FF00"/><rect x="6" y="14" width="1" height="1" fill="#00FF00"/><rect x="6" y="13" width="1" height="1" fill="#00FF00"/><rect x="7" y="12" width="1" height="1" fill="#00FF00"/><rect x="7" y="11" width="1" height="1" fill="#00FF00"/><rect x="8" y="10" width="1" height="1" fill="#00FF00"/><rect x="8" y="9" width="1" height="1" fill="#00FF00"/><rect x="9" y="8" width="1" height="1" fill="#00FF00"/><rect x="10" y="7" width="1" height="1" fill="#00FF00"/><rect x="10" y="6" width="1" height="1" fill="#00FF00"/><rect x="11" y="5" width="1" height="1" fill="#00FF00"/><rect x="11" y="4" width="1" height="1" fill="#00FF00"/><rect x="12" y="3" width="1" height="1" fill="#00FF00"/></svg>
<span style="left:32px;top:175px;font-size:11px;color:#000;font-weight:normal;font-family:'Liberation Sans';font-size:12px;transform:scaleX(0.9167);transform-origin:0 0;">2</span>
<span style="left:52px;top:175px;font-size:11px;color:#000;font-weight:normal;font-family:'Liberation Sans';font-size:12px;transform:scaleX(0.9167);transform-origin:0 0;">0-23</span>
<span style="left:-130px;width:300px;text-align:right;top:175px;font-size:11px;color:#000;font-size:12px;transform:scaleX(0.9167);transform-origin:100% 0;">5</span>
<span style="left:-17px;width:300px;text-align:right;top:175px;font-size:11px;color:#000;font-size:12px;transform:scaleX(0.9167);transform-origin:100% 0;">00:00:00.084479</span>
<span style="left:42px;width:300px;text-align:right;top:175px;font-size:11px;color:#000;font-size:12px;transform:scaleX(0.9167);transform-origin:100% 0;">1442</span>
<span style="left:143px;width:300px;text-align:right;top:175px;font-size:11px;color:#000;font-size:12px;transform:scaleX(0.9167);transform-origin:100% 0;">Bridging PDU</span>
<span style="left:262px;width:300px;text-align:right;top:175px;font-size:11px;color:#000;font-size:12px;transform:scaleX(0.9167);transform-origin:100% 0;">65.247.101.71</span>
<span style="left:383px;width:300px;text-align:right;top:175px;font-size:11px;color:#000;font-size:12px;transform:scaleX(0.9167);transform-origin:100% 0;">66.149.111.146</span>
<svg style="position:absolute;left:14px;top:189px" width="13" height="16" viewBox="0 0 13 16" shape-rendering="crispEdges"><rect x="0" y="10" width="1" height="1" fill="#00FF00"/><rect x="1" y="11" width="1" height="1" fill="#00FF00"/><rect x="2" y="12" width="1" height="1" fill="#00FF00"/><rect x="3" y="13" width="1" height="1" fill="#00FF00"/><rect x="4" y="14" width="1" height="1" fill="#00FF00"/><rect x="5" y="15" width="1" height="1" fill="#00FF00"/><rect x="6" y="14" width="1" height="1" fill="#00FF00"/><rect x="6" y="13" width="1" height="1" fill="#00FF00"/><rect x="7" y="12" width="1" height="1" fill="#00FF00"/><rect x="7" y="11" width="1" height="1" fill="#00FF00"/><rect x="8" y="10" width="1" height="1" fill="#00FF00"/><rect x="8" y="9" width="1" height="1" fill="#00FF00"/><rect x="9" y="8" width="1" height="1" fill="#00FF00"/><rect x="10" y="7" width="1" height="1" fill="#00FF00"/><rect x="10" y="6" width="1" height="1" fill="#00FF00"/><rect x="11" y="5" width="1" height="1" fill="#00FF00"/><rect x="11" y="4" width="1" height="1" fill="#00FF00"/><rect x="12" y="3" width="1" height="1" fill="#00FF00"/></svg>
<span style="left:32px;top:192px;font-size:11px;color:#000;font-weight:normal;font-family:'Liberation Sans';font-size:12px;transform:scaleX(0.9167);transform-origin:0 0;">2</span>
<span style="left:52px;top:192px;font-size:11px;color:#000;font-weight:normal;font-family:'Liberation Sans';font-size:12px;transform:scaleX(0.9167);transform-origin:0 0;">0-23</span>
<span style="left:-130px;width:300px;text-align:right;top:192px;font-size:11px;color:#000;font-size:12px;transform:scaleX(0.9167);transform-origin:100% 0;">6</span>
<span style="left:-17px;width:300px;text-align:right;top:192px;font-size:11px;color:#000;font-size:12px;transform:scaleX(0.9167);transform-origin:100% 0;">00:00:00.101218</span>
<span style="left:42px;width:300px;text-align:right;top:192px;font-size:11px;color:#000;font-size:12px;transform:scaleX(0.9167);transform-origin:100% 0;">1442</span>
<span style="left:143px;width:300px;text-align:right;top:192px;font-size:11px;color:#000;font-size:12px;transform:scaleX(0.9167);transform-origin:100% 0;">Bridging PDU</span>
<span style="left:262px;width:300px;text-align:right;top:192px;font-size:11px;color:#000;font-size:12px;transform:scaleX(0.9167);transform-origin:100% 0;">65.247.101.71</span>
<span style="left:383px;width:300px;text-align:right;top:192px;font-size:11px;color:#000;font-size:12px;transform:scaleX(0.9167);transform-origin:100% 0;">66.149.111.146</span>
<div style="left:771px;top:68px;width:16px;height:137px;background:#D4D0C8;background-image:repeating-conic-gradient(#FFFFFF 0 25%,#D4D0C8 0 50%);background-size:2px 2px;"></div>
<div style="left:771px;top:68px;width:16px;height:16px;background:#D4D0C8;"></div>
<div style="left:771px;top:68px;width:16px;height:1px;background:#D4D0C8;"></div>
<div style="left:771px;top:68px;width:1px;height:16px;background:#D4D0C8;"></div>
<div style="left:772px;top:69px;width:14px;height:1px;background:#FFFFFF;"></div>
<div style="left:772px;top:69px;width:1px;height:14px;background:#FFFFFF;"></div>
<div style="left:772px;top:82px;width:14px;height:1px;background:#808080;"></div>
<div style="left:785px;top:69px;width:1px;height:14px;background:#808080;"></div>
<div style="left:771px;top:83px;width:16px;height:1px;background:#404040;"></div>
<div style="left:786px;top:68px;width:1px;height:16px;background:#404040;"></div>
<div style="left:778px;top:74px;width:1px;height:1px;background:#000;"></div>
<div style="left:777px;top:75px;width:3px;height:1px;background:#000;"></div>
<div style="left:776px;top:76px;width:5px;height:1px;background:#000;"></div>
<div style="left:775px;top:77px;width:7px;height:1px;background:#000;"></div>
<div style="left:771px;top:189px;width:16px;height:16px;background:#D4D0C8;"></div>
<div style="left:771px;top:189px;width:16px;height:1px;background:#D4D0C8;"></div>
<div style="left:771px;top:189px;width:1px;height:16px;background:#D4D0C8;"></div>
<div style="left:772px;top:190px;width:14px;height:1px;background:#FFFFFF;"></div>
<div style="left:772px;top:190px;width:1px;height:14px;background:#FFFFFF;"></div>
<div style="left:772px;top:203px;width:14px;height:1px;background:#808080;"></div>
<div style="left:785px;top:190px;width:1px;height:14px;background:#808080;"></div>
<div style="left:771px;top:204px;width:16px;height:1px;background:#404040;"></div>
<div style="left:786px;top:189px;width:1px;height:16px;background:#404040;"></div>
<div style="left:775px;top:195px;width:7px;height:1px;background:#000;"></div>
<div style="left:776px;top:196px;width:5px;height:1px;background:#000;"></div>
<div style="left:777px;top:197px;width:3px;height:1px;background:#000;"></div>
<div style="left:778px;top:198px;width:1px;height:1px;background:#000;"></div>
<div style="left:771px;top:84px;width:16px;height:8px;background:#D4D0C8;"></div>
<div style="left:771px;top:84px;width:16px;height:1px;background:#D4D0C8;"></div>
<div style="left:771px;top:84px;width:1px;height:8px;background:#D4D0C8;"></div>
<div style="left:772px;top:85px;width:14px;height:1px;background:#FFFFFF;"></div>
<div style="left:772px;top:85px;width:1px;height:6px;background:#FFFFFF;"></div>
<div style="left:772px;top:90px;width:14px;height:1px;background:#808080;"></div>
<div style="left:785px;top:85px;width:1px;height:6px;background:#808080;"></div>
<div style="left:771px;top:91px;width:16px;height:1px;background:#404040;"></div>
<div style="left:786px;top:84px;width:1px;height:8px;background:#404040;"></div>
<div style="left:9px;top:205px;width:762px;height:16px;background:#D4D0C8;background-image:repeating-conic-gradient(#FFFFFF 0 25%,#D4D0C8 0 50%);background-size:2px 2px;"></div>
<div style="left:9px;top:205px;width:16px;height:16px;background:#D4D0C8;"></div>
<div style="left:9px;top:205px;width:16px;height:1px;background:#D4D0C8;"></div>
<div style="left:9px;top:205px;width:1px;height:16px;background:#D4D0C8;"></div>
<div style="left:10px;top:206px;width:14px;height:1px;background:#FFFFFF;"></div>
<div style="left:10px;top:206px;width:1px;height:14px;background:#FFFFFF;"></div>
<div style="left:10px;top:219px;width:14px;height:1px;background:#808080;"></div>
<div style="left:23px;top:206px;width:1px;height:14px;background:#808080;"></div>
<div style="left:9px;top:220px;width:16px;height:1px;background:#404040;"></div>
<div style="left:24px;top:205px;width:1px;height:16px;background:#404040;"></div>
<div style="left:14px;top:212px;width:1px;height:1px;background:#000;"></div>
<div style="left:15px;top:211px;width:1px;height:3px;background:#000;"></div>
<div style="left:16px;top:210px;width:1px;height:5px;background:#000;"></div>
<div style="left:17px;top:209px;width:1px;height:7px;background:#000;"></div>
<div style="left:755px;top:205px;width:16px;height:16px;background:#D4D0C8;"></div>
<div style="left:755px;top:205px;width:16px;height:1px;background:#D4D0C8;"></div>
<div style="left:755px;top:205px;width:1px;height:16px;background:#D4D0C8;"></div>
<div style="left:756px;top:206px;width:14px;height:1px;background:#FFFFFF;"></div>
<div style="left:756px;top:206px;width:1px;height:14px;background:#FFFFFF;"></div>
<div style="left:756px;top:219px;width:14px;height:1px;background:#808080;"></div>
<div style="left:769px;top:206px;width:1px;height:14px;background:#808080;"></div>
<div style="left:755px;top:220px;width:16px;height:1px;background:#404040;"></div>
<div style="left:770px;top:205px;width:1px;height:16px;background:#404040;"></div>
<div style="left:761px;top:209px;width:1px;height:7px;background:#000;"></div>
<div style="left:762px;top:210px;width:1px;height:5px;background:#000;"></div>
<div style="left:763px;top:211px;width:1px;height:3px;background:#000;"></div>
<div style="left:764px;top:212px;width:1px;height:1px;background:#000;"></div>
<div style="left:25px;top:205px;width:155px;height:16px;background:#D4D0C8;"></div>
<div style="left:25px;top:205px;width:155px;height:1px;background:#D4D0C8;"></div>
<div style="left:25px;top:205px;width:1px;height:16px;background:#D4D0C8;"></div>
<div style="left:26px;top:206px;width:153px;height:1px;background:#FFFFFF;"></div>
<div style="left:26px;top:206px;width:1px;height:14px;background:#FFFFFF;"></div>
<div style="left:26px;top:219px;width:153px;height:1px;background:#808080;"></div>
<div style="left:178px;top:206px;width:1px;height:14px;background:#808080;"></div>
<div style="left:25px;top:220px;width:155px;height:1px;background:#404040;"></div>
<div style="left:179px;top:205px;width:1px;height:16px;background:#404040;"></div>
<div style="left:771px;top:205px;width:16px;height:16px;background:#D4D0C8;"></div>
<div style="left:7px;top:226px;width:782px;height:1px;background:#808080;"></div>
<div style="left:7px;top:226px;width:1px;height:237px;background:#808080;"></div>
<div style="left:8px;top:227px;width:780px;height:1px;background:#404040;"></div>
<div style="left:8px;top:227px;width:1px;height:235px;background:#404040;"></div>
<div style="left:8px;top:461px;width:780px;height:1px;background:#D4D0C8;"></div>
<div style="left:787px;top:227px;width:1px;height:235px;background:#D4D0C8;"></div>
<div style="left:7px;top:462px;width:782px;height:1px;background:#FFFFFF;"></div>
<div style="left:788px;top:226px;width:1px;height:237px;background:#FFFFFF;"></div>
<div style="left:9px;top:228px;width:762px;height:217px;background:#FFFFFF;"></div>
<div style="left:9px;top:228px;width:762px;height:217px;overflow:hidden;font-family:'Liberation Mono';font-size:13.33px;white-space:pre;will-change:transform;line-height:14px"><div style="position:relative;top:1px"><div style="height:14px;color:#606060">Card2 TimeSlots=0-23 Frame=0 at 00:00:00.000000 OK Len=1442</div><div style="height:14px;color:#000080">HDLC Frame Data + FCS</div><div style="height:14px;color:#4A0048"> ============ PPP Link Layer ============       =</div><div style="height:14px;color:#4A0048">  Address                                       = 11111111 (255)</div><div style="height:14px;color:#4A0048">  Ctl                                           = 00000011 (3)</div><div style="height:14px;color:#4A0048">  Protocol                                      = 00000000 00110001 Bridging PDU</div><div style="height:14px;color:#4A0048"> ============ Bridging PDU Layer ============   =</div><div style="height:14px;color:#4A0048">  Bit F:                                        = 0....... LAN FCS Field is not present</div><div style="height:14px;color:#4A0048">  Bit I:                                        = .0...... LAN ID Field is not present</div><div style="height:14px;color:#4A0048">  Bit Z:                                        = ..0..... Reserved</div><div style="height:14px;color:#4A0048">  Count                                         = ....0000 (0)</div><div style="height:14px;color:#4A0048">  MAC Type                                      = 00000001 IEEE 802.3/Ethernet</div><div style="height:14px;color:#4A0048">  Destination Address                           = xFFFFFFFFFFFF</div><div style="height:14px;color:#4A0048">  Source Address                                = x0000C587CCB0</div><div style="height:14px;color:#4A0048">  Type                                          = x0800 Internet IP(IPv4)</div><div style="height:14px;color:#4A0048"> ============ IP Layer ============             =</div></div></div>
<div style="left:771px;top:228px;width:16px;height:217px;background:#D4D0C8;background-image:repeating-conic-gradient(#FFFFFF 0 25%,#D4D0C8 0 50%);background-size:2px 2px;"></div>
<div style="left:771px;top:228px;width:16px;height:16px;background:#D4D0C8;"></div>
<div style="left:771px;top:228px;width:16px;height:1px;background:#D4D0C8;"></div>
<div style="left:771px;top:228px;width:1px;height:16px;background:#D4D0C8;"></div>
<div style="left:772px;top:229px;width:14px;height:1px;background:#FFFFFF;"></div>
<div style="left:772px;top:229px;width:1px;height:14px;background:#FFFFFF;"></div>
<div style="left:772px;top:242px;width:14px;height:1px;background:#808080;"></div>
<div style="left:785px;top:229px;width:1px;height:14px;background:#808080;"></div>
<div style="left:771px;top:243px;width:16px;height:1px;background:#404040;"></div>
<div style="left:786px;top:228px;width:1px;height:16px;background:#404040;"></div>
<div style="left:778px;top:234px;width:1px;height:1px;background:#000;"></div>
<div style="left:777px;top:235px;width:3px;height:1px;background:#000;"></div>
<div style="left:776px;top:236px;width:5px;height:1px;background:#000;"></div>
<div style="left:775px;top:237px;width:7px;height:1px;background:#000;"></div>
<div style="left:771px;top:429px;width:16px;height:16px;background:#D4D0C8;"></div>
<div style="left:771px;top:429px;width:16px;height:1px;background:#D4D0C8;"></div>
<div style="left:771px;top:429px;width:1px;height:16px;background:#D4D0C8;"></div>
<div style="left:772px;top:430px;width:14px;height:1px;background:#FFFFFF;"></div>
<div style="left:772px;top:430px;width:1px;height:14px;background:#FFFFFF;"></div>
<div style="left:772px;top:443px;width:14px;height:1px;background:#808080;"></div>
<div style="left:785px;top:430px;width:1px;height:14px;background:#808080;"></div>
<div style="left:771px;top:444px;width:16px;height:1px;background:#404040;"></div>
<div style="left:786px;top:429px;width:1px;height:16px;background:#404040;"></div>
<div style="left:775px;top:435px;width:7px;height:1px;background:#000;"></div>
<div style="left:776px;top:436px;width:5px;height:1px;background:#000;"></div>
<div style="left:777px;top:437px;width:3px;height:1px;background:#000;"></div>
<div style="left:778px;top:438px;width:1px;height:1px;background:#000;"></div>
<div style="left:771px;top:244px;width:16px;height:51px;background:#D4D0C8;"></div>
<div style="left:771px;top:244px;width:16px;height:1px;background:#D4D0C8;"></div>
<div style="left:771px;top:244px;width:1px;height:51px;background:#D4D0C8;"></div>
<div style="left:772px;top:245px;width:14px;height:1px;background:#FFFFFF;"></div>
<div style="left:772px;top:245px;width:1px;height:49px;background:#FFFFFF;"></div>
<div style="left:772px;top:293px;width:14px;height:1px;background:#808080;"></div>
<div style="left:785px;top:245px;width:1px;height:49px;background:#808080;"></div>
<div style="left:771px;top:294px;width:16px;height:1px;background:#404040;"></div>
<div style="left:786px;top:244px;width:1px;height:51px;background:#404040;"></div>
<div style="left:9px;top:445px;width:762px;height:16px;background:#D4D0C8;background-image:repeating-conic-gradient(#FFFFFF 0 25%,#D4D0C8 0 50%);background-size:2px 2px;"></div>
<div style="left:9px;top:445px;width:16px;height:16px;background:#D4D0C8;"></div>
<div style="left:9px;top:445px;width:16px;height:1px;background:#D4D0C8;"></div>
<div style="left:9px;top:445px;width:1px;height:16px;background:#D4D0C8;"></div>
<div style="left:10px;top:446px;width:14px;height:1px;background:#FFFFFF;"></div>
<div style="left:10px;top:446px;width:1px;height:14px;background:#FFFFFF;"></div>
<div style="left:10px;top:459px;width:14px;height:1px;background:#808080;"></div>
<div style="left:23px;top:446px;width:1px;height:14px;background:#808080;"></div>
<div style="left:9px;top:460px;width:16px;height:1px;background:#404040;"></div>
<div style="left:24px;top:445px;width:1px;height:16px;background:#404040;"></div>
<div style="left:14px;top:452px;width:1px;height:1px;background:#000;"></div>
<div style="left:15px;top:451px;width:1px;height:3px;background:#000;"></div>
<div style="left:16px;top:450px;width:1px;height:5px;background:#000;"></div>
<div style="left:17px;top:449px;width:1px;height:7px;background:#000;"></div>
<div style="left:755px;top:445px;width:16px;height:16px;background:#D4D0C8;"></div>
<div style="left:755px;top:445px;width:16px;height:1px;background:#D4D0C8;"></div>
<div style="left:755px;top:445px;width:1px;height:16px;background:#D4D0C8;"></div>
<div style="left:756px;top:446px;width:14px;height:1px;background:#FFFFFF;"></div>
<div style="left:756px;top:446px;width:1px;height:14px;background:#FFFFFF;"></div>
<div style="left:756px;top:459px;width:14px;height:1px;background:#808080;"></div>
<div style="left:769px;top:446px;width:1px;height:14px;background:#808080;"></div>
<div style="left:755px;top:460px;width:16px;height:1px;background:#404040;"></div>
<div style="left:770px;top:445px;width:1px;height:16px;background:#404040;"></div>
<div style="left:761px;top:449px;width:1px;height:7px;background:#000;"></div>
<div style="left:762px;top:450px;width:1px;height:5px;background:#000;"></div>
<div style="left:763px;top:451px;width:1px;height:3px;background:#000;"></div>
<div style="left:764px;top:452px;width:1px;height:1px;background:#000;"></div>
<div style="left:25px;top:445px;width:272px;height:16px;background:#D4D0C8;"></div>
<div style="left:25px;top:445px;width:272px;height:1px;background:#D4D0C8;"></div>
<div style="left:25px;top:445px;width:1px;height:16px;background:#D4D0C8;"></div>
<div style="left:26px;top:446px;width:270px;height:1px;background:#FFFFFF;"></div>
<div style="left:26px;top:446px;width:1px;height:14px;background:#FFFFFF;"></div>
<div style="left:26px;top:459px;width:270px;height:1px;background:#808080;"></div>
<div style="left:295px;top:446px;width:1px;height:14px;background:#808080;"></div>
<div style="left:25px;top:460px;width:272px;height:1px;background:#404040;"></div>
<div style="left:296px;top:445px;width:1px;height:16px;background:#404040;"></div>
<div style="left:771px;top:445px;width:16px;height:16px;background:#D4D0C8;"></div>
<div style="left:7px;top:466px;width:782px;height:1px;background:#808080;"></div>
<div style="left:7px;top:466px;width:1px;height:127px;background:#808080;"></div>
<div style="left:8px;top:467px;width:780px;height:1px;background:#404040;"></div>
<div style="left:8px;top:467px;width:1px;height:125px;background:#404040;"></div>
<div style="left:8px;top:591px;width:780px;height:1px;background:#D4D0C8;"></div>
<div style="left:787px;top:467px;width:1px;height:125px;background:#D4D0C8;"></div>
<div style="left:7px;top:592px;width:782px;height:1px;background:#FFFFFF;"></div>
<div style="left:788px;top:466px;width:1px;height:127px;background:#FFFFFF;"></div>
<div style="left:9px;top:468px;width:762px;height:107px;background:#FFFFFF;"></div>
<div style="left:9px;top:468px;width:762px;height:107px;overflow:hidden;font-family:'Liberation Mono';font-size:13.33px;white-space:pre;will-change:transform;line-height:14px;color:#000080"><div style="position:relative;top:1px"><div style="height:14px">Hex Dump of the Frame Data</div><div style="height:14px"></div><div style="height:14px">FF 03 00 31 00 01 FF FF FF FF FF FF 00 00 C5 87     ÿ  1  ÿÿÿÿÿÿ  Å </div><div style="height:14px">CC B0 08 00 45 00 05 8C 21 33 40 00 74 06 86 D3     Ì°  E   !3@ t  Ó</div><div style="height:14px">41 F7 65 47 42 95 6F 92 00 50 FB BE C8 30 0B 4F     A÷eGB o´ Pû¾È0 O</div><div style="height:14px">99 C3 90 81 50 10 FC EA 57 7A 00 00 9C 07 1E E0      Ã  P üêWz     à</div><div style="height:14px">0C 41 BA 33 1B D0 71 4C 1A 85 71 D4 D3 45 1C C7      Aº3 ÐqL  qÔÓE Ç</div><div style="height:14px">89 C7 12 9F 6A FC 45 29 6C 7B 28 37 96 CF 53 66      Ç  jüE)l{(7 ÏSf</div></div><svg style="position:absolute;left:0;top:0" width="762" height="107" shape-rendering="crispEdges"><rect x="539" y="31" width="3" height="9" fill="#000080"/><rect x="475" y="45" width="3" height="9" fill="#000080"/><rect x="531" y="45" width="3" height="9" fill="#000080"/><rect x="459" y="59" width="3" height="9" fill="#000080"/><rect x="419" y="73" width="3" height="9" fill="#000080"/><rect x="435" y="73" width="3" height="9" fill="#000080"/><rect x="443" y="73" width="3" height="9" fill="#000080"/><rect x="515" y="73" width="3" height="9" fill="#000080"/><rect x="491" y="87" width="3" height="9" fill="#000080"/><rect x="419" y="101" width="3" height="9" fill="#000080"/><rect x="443" y="101" width="3" height="9" fill="#000080"/><rect x="515" y="101" width="3" height="9" fill="#000080"/><rect x="1" y="21" width="7" height="1" fill="#000080"/><rect x="9" y="21" width="7" height="1" fill="#000080"/><rect x="17" y="21" width="7" height="1" fill="#000080"/><rect x="25" y="21" width="7" height="1" fill="#000080"/><rect x="33" y="21" width="7" height="1" fill="#000080"/><rect x="41" y="21" width="7" height="1" fill="#000080"/><rect x="49" y="21" width="7" height="1" fill="#000080"/><rect x="57" y="21" width="7" height="1" fill="#000080"/><rect x="65" y="21" width="7" height="1" fill="#000080"/><rect x="73" y="21" width="7" height="1" fill="#000080"/><rect x="81" y="21" width="7" height="1" fill="#000080"/><rect x="89" y="21" width="7" height="1" fill="#000080"/><rect x="97" y="21" width="7" height="1" fill="#000080"/><rect x="105" y="21" width="7" height="1" fill="#000080"/><rect x="113" y="21" width="7" height="1" fill="#000080"/><rect x="121" y="21" width="7" height="1" fill="#000080"/><rect x="129" y="21" width="7" height="1" fill="#000080"/><rect x="137" y="21" width="7" height="1" fill="#000080"/><rect x="145" y="21" width="7" height="1" fill="#000080"/><rect x="153" y="21" width="7" height="1" fill="#000080"/><rect x="161" y="21" width="7" height="1" fill="#000080"/><rect x="169" y="21" width="7" height="1" fill="#000080"/><rect x="177" y="21" width="7" height="1" fill="#000080"/><rect x="185" y="21" width="7" height="1" fill="#000080"/><rect x="193" y="21" width="7" height="1" fill="#000080"/><rect x="201" y="21" width="7" height="1" fill="#000080"/><rect x="209" y="21" width="7" height="1" fill="#000080"/><rect x="217" y="21" width="7" height="1" fill="#000080"/><rect x="225" y="21" width="7" height="1" fill="#000080"/><rect x="233" y="21" width="7" height="1" fill="#000080"/><rect x="241" y="21" width="7" height="1" fill="#000080"/><rect x="249" y="21" width="7" height="1" fill="#000080"/><rect x="257" y="21" width="7" height="1" fill="#000080"/><rect x="265" y="21" width="7" height="1" fill="#000080"/><rect x="273" y="21" width="7" height="1" fill="#000080"/><rect x="281" y="21" width="7" height="1" fill="#000080"/><rect x="289" y="21" width="7" height="1" fill="#000080"/><rect x="297" y="21" width="7" height="1" fill="#000080"/><rect x="305" y="21" width="7" height="1" fill="#000080"/><rect x="313" y="21" width="7" height="1" fill="#000080"/><rect x="321" y="21" width="7" height="1" fill="#000080"/><rect x="329" y="21" width="7" height="1" fill="#000080"/><rect x="337" y="21" width="7" height="1" fill="#000080"/><rect x="345" y="21" width="7" height="1" fill="#000080"/><rect x="353" y="21" width="7" height="1" fill="#000080"/><rect x="361" y="21" width="7" height="1" fill="#000080"/><rect x="369" y="21" width="7" height="1" fill="#000080"/><rect x="377" y="21" width="7" height="1" fill="#000080"/><rect x="417" y="21" width="7" height="1" fill="#000080"/><rect x="425" y="21" width="7" height="1" fill="#000080"/><rect x="433" y="21" width="7" height="1" fill="#000080"/><rect x="441" y="21" width="7" height="1" fill="#000080"/><rect x="449" y="21" width="7" height="1" fill="#000080"/><rect x="457" y="21" width="7" height="1" fill="#000080"/><rect x="465" y="21" width="7" height="1" fill="#000080"/><rect x="473" y="21" width="7" height="1" fill="#000080"/><rect x="481" y="21" width="7" height="1" fill="#000080"/><rect x="489" y="21" width="7" height="1" fill="#000080"/><rect x="497" y="21" width="7" height="1" fill="#000080"/><rect x="505" y="21" width="7" height="1" fill="#000080"/><rect x="513" y="21" width="7" height="1" fill="#000080"/><rect x="521" y="21" width="7" height="1" fill="#000080"/><rect x="529" y="21" width="7" height="1" fill="#000080"/><rect x="537" y="21" width="7" height="1" fill="#000080"/><rect x="4" y="18" width="1" height="8" fill="#000080"/><rect x="100" y="18" width="1" height="8" fill="#000080"/><rect x="196" y="18" width="1" height="8" fill="#000080"/><rect x="292" y="18" width="1" height="8" fill="#000080"/><rect x="420" y="18" width="1" height="8" fill="#000080"/><rect x="452" y="18" width="1" height="8" fill="#000080"/><rect x="484" y="18" width="1" height="8" fill="#000080"/><rect x="516" y="18" width="1" height="8" fill="#000080"/></svg></div>
<div style="left:771px;top:468px;width:16px;height:107px;background:#D4D0C8;background-image:repeating-conic-gradient(#FFFFFF 0 25%,#D4D0C8 0 50%);background-size:2px 2px;"></div>
<div style="left:771px;top:468px;width:16px;height:16px;background:#D4D0C8;"></div>
<div style="left:771px;top:468px;width:16px;height:1px;background:#D4D0C8;"></div>
<div style="left:771px;top:468px;width:1px;height:16px;background:#D4D0C8;"></div>
<div style="left:772px;top:469px;width:14px;height:1px;background:#FFFFFF;"></div>
<div style="left:772px;top:469px;width:1px;height:14px;background:#FFFFFF;"></div>
<div style="left:772px;top:482px;width:14px;height:1px;background:#808080;"></div>
<div style="left:785px;top:469px;width:1px;height:14px;background:#808080;"></div>
<div style="left:771px;top:483px;width:16px;height:1px;background:#404040;"></div>
<div style="left:786px;top:468px;width:1px;height:16px;background:#404040;"></div>
<div style="left:778px;top:474px;width:1px;height:1px;background:#000;"></div>
<div style="left:777px;top:475px;width:3px;height:1px;background:#000;"></div>
<div style="left:776px;top:476px;width:5px;height:1px;background:#000;"></div>
<div style="left:775px;top:477px;width:7px;height:1px;background:#000;"></div>
<div style="left:771px;top:559px;width:16px;height:16px;background:#D4D0C8;"></div>
<div style="left:771px;top:559px;width:16px;height:1px;background:#D4D0C8;"></div>
<div style="left:771px;top:559px;width:1px;height:16px;background:#D4D0C8;"></div>
<div style="left:772px;top:560px;width:14px;height:1px;background:#FFFFFF;"></div>
<div style="left:772px;top:560px;width:1px;height:14px;background:#FFFFFF;"></div>
<div style="left:772px;top:573px;width:14px;height:1px;background:#808080;"></div>
<div style="left:785px;top:560px;width:1px;height:14px;background:#808080;"></div>
<div style="left:771px;top:574px;width:16px;height:1px;background:#404040;"></div>
<div style="left:786px;top:559px;width:1px;height:16px;background:#404040;"></div>
<div style="left:775px;top:565px;width:7px;height:1px;background:#000;"></div>
<div style="left:776px;top:566px;width:5px;height:1px;background:#000;"></div>
<div style="left:777px;top:567px;width:3px;height:1px;background:#000;"></div>
<div style="left:778px;top:568px;width:1px;height:1px;background:#000;"></div>
<div style="left:771px;top:484px;width:16px;height:8px;background:#D4D0C8;"></div>
<div style="left:771px;top:484px;width:16px;height:1px;background:#D4D0C8;"></div>
<div style="left:771px;top:484px;width:1px;height:8px;background:#D4D0C8;"></div>
<div style="left:772px;top:485px;width:14px;height:1px;background:#FFFFFF;"></div>
<div style="left:772px;top:485px;width:1px;height:6px;background:#FFFFFF;"></div>
<div style="left:772px;top:490px;width:14px;height:1px;background:#808080;"></div>
<div style="left:785px;top:485px;width:1px;height:6px;background:#808080;"></div>
<div style="left:771px;top:491px;width:16px;height:1px;background:#404040;"></div>
<div style="left:786px;top:484px;width:1px;height:8px;background:#404040;"></div>
<div style="left:9px;top:575px;width:762px;height:16px;background:#D4D0C8;background-image:repeating-conic-gradient(#FFFFFF 0 25%,#D4D0C8 0 50%);background-size:2px 2px;"></div>
<div style="left:9px;top:575px;width:16px;height:16px;background:#D4D0C8;"></div>
<div style="left:9px;top:575px;width:16px;height:1px;background:#D4D0C8;"></div>
<div style="left:9px;top:575px;width:1px;height:16px;background:#D4D0C8;"></div>
<div style="left:10px;top:576px;width:14px;height:1px;background:#FFFFFF;"></div>
<div style="left:10px;top:576px;width:1px;height:14px;background:#FFFFFF;"></div>
<div style="left:10px;top:589px;width:14px;height:1px;background:#808080;"></div>
<div style="left:23px;top:576px;width:1px;height:14px;background:#808080;"></div>
<div style="left:9px;top:590px;width:16px;height:1px;background:#404040;"></div>
<div style="left:24px;top:575px;width:1px;height:16px;background:#404040;"></div>
<div style="left:14px;top:582px;width:1px;height:1px;background:#000;"></div>
<div style="left:15px;top:581px;width:1px;height:3px;background:#000;"></div>
<div style="left:16px;top:580px;width:1px;height:5px;background:#000;"></div>
<div style="left:17px;top:579px;width:1px;height:7px;background:#000;"></div>
<div style="left:755px;top:575px;width:16px;height:16px;background:#D4D0C8;"></div>
<div style="left:755px;top:575px;width:16px;height:1px;background:#D4D0C8;"></div>
<div style="left:755px;top:575px;width:1px;height:16px;background:#D4D0C8;"></div>
<div style="left:756px;top:576px;width:14px;height:1px;background:#FFFFFF;"></div>
<div style="left:756px;top:576px;width:1px;height:14px;background:#FFFFFF;"></div>
<div style="left:756px;top:589px;width:14px;height:1px;background:#808080;"></div>
<div style="left:769px;top:576px;width:1px;height:14px;background:#808080;"></div>
<div style="left:755px;top:590px;width:16px;height:1px;background:#404040;"></div>
<div style="left:770px;top:575px;width:1px;height:16px;background:#404040;"></div>
<div style="left:761px;top:579px;width:1px;height:7px;background:#000;"></div>
<div style="left:762px;top:580px;width:1px;height:5px;background:#000;"></div>
<div style="left:763px;top:581px;width:1px;height:3px;background:#000;"></div>
<div style="left:764px;top:582px;width:1px;height:1px;background:#000;"></div>
<div style="left:25px;top:575px;width:543px;height:16px;background:#D4D0C8;"></div>
<div style="left:25px;top:575px;width:543px;height:1px;background:#D4D0C8;"></div>
<div style="left:25px;top:575px;width:1px;height:16px;background:#D4D0C8;"></div>
<div style="left:26px;top:576px;width:541px;height:1px;background:#FFFFFF;"></div>
<div style="left:26px;top:576px;width:1px;height:14px;background:#FFFFFF;"></div>
<div style="left:26px;top:589px;width:541px;height:1px;background:#808080;"></div>
<div style="left:566px;top:576px;width:1px;height:14px;background:#808080;"></div>
<div style="left:25px;top:590px;width:543px;height:1px;background:#404040;"></div>
<div style="left:567px;top:575px;width:1px;height:16px;background:#404040;"></div>
<div style="left:771px;top:575px;width:16px;height:16px;background:#D4D0C8;"></div>
<span style="left:8px;top:597px;font-size:11px;color:#000;font-weight:normal;font-family:'Liberation Sans';">Off-line Viewing</span>
<div style="left:269px;top:595px;width:172px;height:1px;background:#808080;"></div>
<div style="left:269px;top:595px;width:1px;height:16px;background:#808080;"></div>
<div style="left:269px;top:610px;width:172px;height:1px;background:#FFFFFF;"></div>
<div style="left:440px;top:595px;width:1px;height:16px;background:#FFFFFF;"></div>
<div style="left:270px;top:596px;width:170px;height:14px;overflow:hidden"><span style="left:0px;top:1px;font-size:11px;transform:scaleX(0.945);transform-origin:0 0;">D:\Program Files\GL Communication</span></div>
<div style="left:443px;top:595px;width:172px;height:1px;background:#808080;"></div>
<div style="left:443px;top:595px;width:1px;height:16px;background:#808080;"></div>
<div style="left:443px;top:610px;width:172px;height:1px;background:#FFFFFF;"></div>
<div style="left:614px;top:595px;width:1px;height:16px;background:#FFFFFF;"></div>
<span style="left:444px;top:597px;font-size:11px;color:#000;font-weight:normal;font-family:'Liberation Sans';">402 Frames</span>
<div style="left:617px;top:595px;width:147px;height:1px;background:#808080;"></div>
<div style="left:617px;top:595px;width:1px;height:16px;background:#808080;"></div>
<div style="left:617px;top:610px;width:147px;height:1px;background:#FFFFFF;"></div>
<div style="left:763px;top:595px;width:1px;height:16px;background:#FFFFFF;"></div>
<div style="left:766px;top:595px;width:23px;height:1px;background:#808080;"></div>
<div style="left:766px;top:595px;width:1px;height:16px;background:#808080;"></div>
<div style="left:766px;top:610px;width:23px;height:1px;background:#FFFFFF;"></div>
<div style="left:788px;top:595px;width:1px;height:16px;background:#FFFFFF;"></div>
<svg style="position:absolute;left:775px;top:599px" width="14" height="12" viewBox="0 0 14 12" shape-rendering="crispEdges"><path d="M11 11 L13 9" stroke="#fff" stroke-width="1" shape-rendering="auto"/><path d="M10 11 L13 8" stroke="#808080" stroke-width="1" shape-rendering="auto"/><path d="M9 11 L13 7" stroke="#808080" stroke-width="1" shape-rendering="auto"/><path d="M7 11 L13 5" stroke="#fff" stroke-width="1" shape-rendering="auto"/><path d="M6 11 L13 4" stroke="#808080" stroke-width="1" shape-rendering="auto"/><path d="M5 11 L13 3" stroke="#808080" stroke-width="1" shape-rendering="auto"/><path d="M3 11 L13 1" stroke="#fff" stroke-width="1" shape-rendering="auto"/><path d="M2 11 L13 0" stroke="#808080" stroke-width="1" shape-rendering="auto"/><path d="M1 11 L13 -1" stroke="#808080" stroke-width="1" shape-rendering="auto"/></svg>
</body></html>
